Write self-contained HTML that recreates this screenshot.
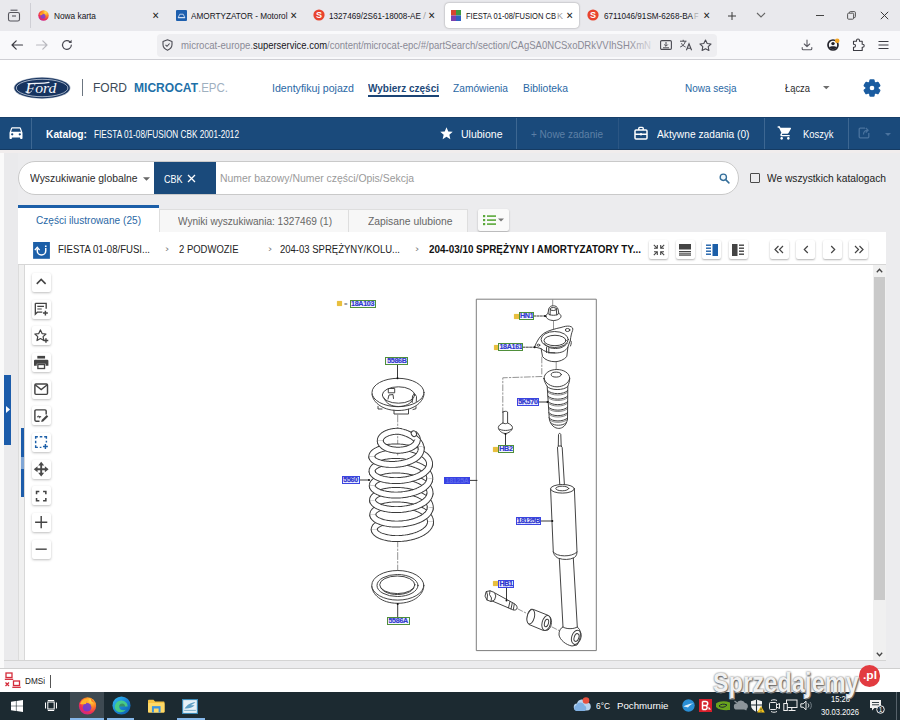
<!DOCTYPE html>
<html lang="pl">
<head>
<meta charset="utf-8">
<title>FIESTA 01-08/FUSION CBK</title>
<style>
*{box-sizing:border-box;margin:0;padding:0}
html,body{width:900px;height:720px;overflow:hidden;background:#fff;font-family:"Liberation Sans",sans-serif;}
#root{position:relative;width:900px;height:720px;overflow:hidden;background:#ececee}
.a{position:absolute;white-space:nowrap;line-height:1}
.t{position:absolute;white-space:nowrap;line-height:1;transform-origin:0 50%;display:inline-block}
svg{position:absolute;overflow:visible}
/* browser chrome */
#tabbar{left:0;top:0;width:900px;height:31px;background:#e9e9ed}
#navbar{left:0;top:31px;width:900px;height:29px;background:#f9f9fb;border-bottom:1px solid #cfcfd4}
#urlbar{left:157px;top:34px;width:560px;height:23px;background:#eeeef1;border-radius:4px}
.tab{font-size:9.5px;color:#15141a;top:11px}
.tx{font-size:10px;color:#222;top:10.500px}
#acttab{left:445px;top:3px;width:134px;height:25px;background:#fff;border-radius:4px;box-shadow:0 0 2px rgba(0,0,0,.4)}
/* page */
#hdr{left:0;top:60px;width:900px;height:57px;background:#fff}
#bluebar{left:0;top:116.600px;width:900px;height:33.700px;background:#1a4a7b;border-top:1px solid #173f6a;border-bottom:1.500px solid #153b63}
.bb{color:#fff;font-size:10.300px;top:129.900px}
.sep{width:1px;top:118px;height:31px;background:#3d6792}
.nav{font-size:10.5px;color:#2a68a5;top:83px}
#search{left:18px;top:161px;width:721px;height:34px;background:#fff;border:1px solid #c9c9c9;border-radius:17px;overflow:hidden}
#crumbs{left:18px;top:232px;width:868px;height:32.500px;background:#fff;border-bottom:1px solid #d6d6d6}
.cr{font-size:10px;color:#222;top:245px}
.chev{font-size:9px;color:#777;top:245px}
#content{left:25px;top:265px;width:848px;height:395px;background:#fff}
.tb{left:32px;width:19px;height:19px;background:#fff;border-radius:2px;box-shadow:0 1px 2.500px rgba(0,0,0,.26)}
.ib{top:240px;width:19px;height:19px;background:#fff;border-radius:2px;box-shadow:0 1px 2px rgba(0,0,0,.30)}
#taskbar{left:0;top:691.700px;width:900px;height:28.300px;background:#1c2a31}
#dmsi{left:0;top:668px;width:900px;height:24px;background:#fff;border-top:1px solid #cfcfcf}
.lb{position:absolute;font-size:7.2px;font-weight:bold;line-height:6.6px;text-align:center;color:#2a33c9;background:#f3f5ff;border:1px solid #4f8f3a;letter-spacing:-0.35px;overflow:hidden;-webkit-text-stroke:.18px #3a44d6}
.lbb{border-color:#3a45e0;background:#eef0ff;-webkit-text-stroke:.3px #3a44d6}
.lbf{background:#3c4be4;color:#dfe3ff;border-color:#3c4be4;-webkit-text-stroke:.2px #dfe3ff}
.lbs{color:#5a66ec;-webkit-text-stroke:0;background:#3842e2;border-color:#3842e2}
.ysq{position:absolute;width:5px;height:5px;background:#e8bf3e;border-radius:.8px;box-shadow:0 0 1px #e8bf3e}
</style>
</head>
<body>
<div id="root">
<!--TABBAR-->
<div class="a" id="tabbar"></div>
<div class="a" id="navbar"></div>
<div class="a" id="urlbar"></div>
<div class="a" id="acttab"></div>
<!--TABTEXT-->
<svg style="left:7px;top:9px" width="14" height="13" viewBox="0 0 14 13"><rect x="1.5" y="3.5" width="11" height="8.5" rx="1.8" fill="none" stroke="#55555c" stroke-width="1.1"/><path d="M3.5 1.2h7" stroke="#55555c" stroke-width="1.1" fill="none"/><path d="M5 7h4" stroke="#55555c" stroke-width="1.1"/></svg>
<div class="a" style="left:30px;top:3px;width:1px;height:25px;background:#cfcfd5"></div>
<svg style="left:38px;top:10px" width="11" height="11" viewBox="0 0 22 22"><defs><radialGradient id="fx" cx="0.7" cy="0.2" r="0.95"><stop offset="0" stop-color="#ffe14a"/><stop offset="0.35" stop-color="#ff8a23"/><stop offset="0.7" stop-color="#f0304f"/><stop offset="1" stop-color="#b71fb0"/></radialGradient></defs><circle cx="11" cy="11" r="10.5" fill="url(#fx)"/><circle cx="10" cy="12.5" r="5" fill="#7a3cd8" opacity=".85"/><path d="M3 9c2-4 6-6 9-3-3 0-4 2-3 4-2 0-4 1-6-1z" fill="#ff9a1f"/></svg>
<span class="t tab" style="transform:scaleX(0.8739);left:54px">Nowa karta</span>
<span class="t tx" style="transform:scaleX(0.8750);left:152px;">✕</span>
<svg style="left:176px;top:10px" width="11" height="11" viewBox="0 0 11 11"><rect width="11" height="11" rx="1" fill="#1d5fae"/><path d="M2.2 7.6l1.6-3.4h3.4l1.6 3.4z" fill="none" stroke="#dfe9f7" stroke-width=".8"/><path d="M2 7.7h7" stroke="#dfe9f7" stroke-width=".9"/></svg>
<span class="t tab" style="transform:scaleX(0.8623);left:191px">AMORTYZATOR - Motorol</span>
<span class="t tx" style="transform:scaleX(0.8750);left:290px;">✕</span>
<svg style="left:313px;top:9px" width="12" height="12" viewBox="0 0 12 12"><circle cx="6" cy="6" r="5.6" fill="#e8432e"/><text x="6" y="9.2" font-size="9" font-weight="bold" text-anchor="middle" fill="#fff" font-family="Liberation Sans">S</text></svg>
<span class="t tab" style="transform:scaleX(0.8579);left:329px">1327469/2S61-18008-AE</span>
<span class="t tab" style="transform:scaleX(1.1361);left:423px;color:#aaa">/</span>
<span class="t tx" style="transform:scaleX(0.8750);left:427.5px;">✕</span>
<svg style="left:451px;top:10px" width="10" height="11" viewBox="0 0 10 11"><rect x="0" y="0" width="5" height="5.5" fill="#d5452f"/><rect x="5" y="0" width="5" height="5.5" fill="#3c9a43"/><rect x="0" y="5.5" width="5" height="5.5" fill="#7b3fb0"/><rect x="5" y="5.5" width="5" height="5.5" fill="#2d62c4"/></svg>
<span class="t tab" style="transform:scaleX(0.7942);left:466px">FIESTA 01-08/FUSION CB</span>
<span class="t tab" style="transform:scaleX(0.9458);left:556.5px;color:#999">K</span>
<span class="t tx" style="transform:scaleX(0.8750);left:565.5px;">✕</span>
<svg style="left:587px;top:9px" width="12" height="12" viewBox="0 0 12 12"><circle cx="6" cy="6" r="5.6" fill="#e8432e"/><text x="6" y="9.2" font-size="9" font-weight="bold" text-anchor="middle" fill="#fff" font-family="Liberation Sans">S</text></svg>
<span class="t tab" style="transform:scaleX(0.8568);left:603.5px">6711046/91SM-6268-BA</span>
<span class="t tab" style="transform:scaleX(0.7742);left:694px;color:#aaa">F</span>
<span class="t tx" style="transform:scaleX(0.8750);left:702.5px;">✕</span>
<svg style="left:727px;top:11px" width="10" height="10" viewBox="0 0 10 10"><path d="M5 1v8M1 5h8" stroke="#3a3a3a" stroke-width="1"/></svg>
<svg style="left:756px;top:12px" width="10" height="6" viewBox="0 0 10 6"><path d="M1 1l4 4 4-4" stroke="#666" stroke-width="1.1" fill="none"/></svg>
<div class="a" style="left:816px;top:15px;width:7.500px;height:1px;background:#444"></div>
<svg style="left:847px;top:11px" width="9" height="9" viewBox="0 0 9 9"><rect x=".6" y="2.2" width="6" height="6" rx="1" fill="none" stroke="#444" stroke-width=".9"/><path d="M2.4 2V1.6a1 1 0 011-1h4a1 1 0 011 1v4a1 1 0 01-1 1h-.6" fill="none" stroke="#444" stroke-width=".9"/></svg>
<svg style="left:880px;top:11px" width="9" height="9" viewBox="0 0 9 9"><path d="M.8.8l7.400 7.400M8.200 .8L.8 8.200" stroke="#3a3a3a" stroke-width="1"/></svg>
<!--NAVICONS-->
<svg style="left:11px;top:40px" width="12" height="10" viewBox="0 0 12 10"><path d="M5.200 .8L1 5l4.200 4.200M1 5h10.500" fill="none" stroke="#3b3b42" stroke-width="1.2" stroke-linecap="round" stroke-linejoin="round"/></svg>
<svg style="left:36px;top:40px" width="12" height="10" viewBox="0 0 12 10"><path d="M6.800 .8L11 5l-4.200 4.200M11 5H.5" fill="none" stroke="#b9b9bf" stroke-width="1.2" stroke-linecap="round" stroke-linejoin="round"/></svg>
<svg style="left:61px;top:39px" width="12" height="12" viewBox="0 0 12 12"><path d="M10.300 6.200a4.400 4.400 0 11-1.300-3.300" fill="none" stroke="#4a4a52" stroke-width="1.2" stroke-linecap="round"/><path d="M10.600 .8v3.100H7.500z" fill="#4a4a52"/></svg>
<svg style="left:162px;top:39px" width="11" height="12" viewBox="0 0 11 12"><path d="M5.500 .8l4.500 1.600v3.100c0 2.800-2 4.700-4.500 5.700C3 10.200 1 8.300 1 5.500V2.400z" fill="none" stroke="#4a4a52" stroke-width="1.100" stroke-linejoin="round"/><path d="M3.500 5.800l1.500 1.500 2.600-2.800" fill="none" stroke="#4a4a52" stroke-width="1.100"/></svg>
<span class="t" style="transform:scaleX(0.9139);left:181px;top:40px;font-size:10.5px;color:#8a8a96">microcat-europe.</span>
<span class="t" style="transform:scaleX(0.8994);left:253px;top:40px;font-size:10.5px;color:#15141a">superservice.com</span>
<span class="t" style="transform:scaleX(0.9072);left:327px;top:40px;font-size:10.5px;color:#8a8a96">/content/microcat-epc/#/partSearch/section/CAgSA0NCSxoDRkVVIhSHXmN</span>
<div class="a" style="left:628px;top:35px;width:30px;height:21px;background:linear-gradient(90deg,rgba(238,238,241,0),#eeeef1)"></div>
<svg style="left:660px;top:40px" width="12" height="10" viewBox="0 0 12 10"><rect x=".6" y=".6" width="10.800" height="8.800" rx="1.2" fill="none" stroke="#4a4a52" stroke-width="1.100"/><path d="M6 2v4M4.200 4.500L6 6.300l1.800-1.800M3 7.800h6" fill="none" stroke="#4a4a52" stroke-width="1"/></svg>
<svg style="left:679px;top:39px" width="14" height="12" viewBox="0 0 14 12"><path d="M1 2.200h6.500M4.200 .8v1.400M6.300 2.300C5.800 5 3.800 7 1.200 8M2.500 4.200C3.200 6 4.800 7.300 6.600 8" fill="none" stroke="#4a4a52" stroke-width="1"/><path d="M7.400 11.300l2.600-6.500 2.600 6.500M8.300 9.300h3.400" fill="none" stroke="#4a4a52" stroke-width="1.100"/></svg>
<svg style="left:699px;top:39px" width="13" height="12" viewBox="0 0 13 12"><path d="M6.500 1l1.700 3.500 3.800.5-2.800 2.700.7 3.800-3.400-1.800-3.400 1.800.7-3.800L1 5l3.800-.5z" fill="none" stroke="#4a4a52" stroke-width="1.100" stroke-linejoin="round"/></svg>
<svg style="left:801px;top:39px" width="12" height="12" viewBox="0 0 12 12"><path d="M6 1v6.500M3.300 5L6 7.700 8.700 5M1.200 8.500v1.300a1 1 0 001 1h7.600a1 1 0 001-1V8.500" fill="none" stroke="#5a5a62" stroke-width="1.100" stroke-linecap="round" stroke-linejoin="round"/></svg>
<svg style="left:827px;top:38px" width="13" height="13" viewBox="0 0 13 13"><circle cx="6" cy="7" r="5" fill="none" stroke="#24242c" stroke-width="1.700"/><path d="M2.200 9.500c1-1.800 6.600-1.800 7.600 0A5 5 0 012.200 9.500z" fill="#24242c"/><circle cx="6" cy="5.600" r="1.700" fill="#24242c"/><circle cx="10.200" cy="2.700" r="2.300" fill="#f5a623"/></svg>
<svg style="left:852px;top:38px" width="13" height="14" viewBox="0 0 13 14"><path d="M4.500 3.200V2.500a1.500 1.500 0 013 0v.7h2.700v3h.5a1.500 1.500 0 010 3h-.5v3.300H1.500V9.200H2a1.500 1.500 0 000-3h-.5v-3z" fill="none" stroke="#3b3b42" stroke-width="1.100" stroke-linejoin="round"/></svg>
<svg style="left:878px;top:40px" width="11" height="10" viewBox="0 0 11 10"><path d="M.5 1.500h10M.5 5h10M.5 8.500h10" stroke="#3b3b42" stroke-width="1.100"/></svg>
<!--HEADER-->
<div class="a" id="hdr"></div>
<div class="a" id="bluebar"></div>
<!--HDRCONTENT-->
<svg style="left:13px;top:75.600px" width="58" height="24" viewBox="0 0 58 24"><ellipse cx="29.100" cy="12" rx="28.400" ry="10.900" fill="#aab4c4"/><ellipse cx="29.100" cy="12" rx="27.700" ry="10.300" fill="#16335f"/><ellipse cx="29.100" cy="12" rx="25.800" ry="8.700" fill="none" stroke="#dfe6f0" stroke-width=".7"/><text x="28" y="16.800" font-family="Liberation Serif" font-style="italic" font-size="15" fill="#f4f7fb" text-anchor="middle" textLength="31" lengthAdjust="spacingAndGlyphs">Ford</text><path d="M15.500 8.200 C20 6.200 27 8.500 36 6.300" fill="none" stroke="#f4f7fb" stroke-width="1.200" stroke-linecap="round"/><path d="M13 15.500 C14 18 17.500 17.500 18.500 15" fill="none" stroke="#f4f7fb" stroke-width="1" stroke-linecap="round"/></svg>
<div class="a" style="left:82px;top:79px;width:1px;height:17px;background:#6b7580"></div>
<span class="t" style="transform:scaleX(0.9599);left:93px;top:81.500px;font-size:12.500px;color:#3c4a58">FORD</span>
<span class="t" style="transform:scaleX(0.9633);left:134px;top:81.500px;font-size:12.500px;font-weight:bold;color:#1d70a8">MICROCAT</span>
<span class="t" style="transform:scaleX(0.9187);left:198px;top:81.500px;font-size:12.500px;color:#9fb0bf">.EPC.</span>
<span class="t nav" style="transform:scaleX(1.0106);left:272px">Identyfikuj pojazd</span>
<span class="t nav" style="transform:scaleX(0.9528);left:368px;font-weight:bold;color:#1c4878">Wybierz części</span>
<div class="a" style="left:368px;top:95px;width:71px;height:1.500px;background:#1b4475"></div>
<span class="t nav" style="transform:scaleX(0.9716);left:453px">Zamówienia</span>
<span class="t nav" style="transform:scaleX(0.9883);left:523px">Biblioteka</span>
<span class="t nav" style="transform:scaleX(0.9488);left:684.500px">Nowa sesja</span>
<span class="t nav" style="transform:scaleX(0.8919);left:784.500px;color:#2b2b2b">Łącza</span>
<svg style="left:822.800px;top:86.300px" width="6.600" height="3.400" viewBox="0 0 8 4"><path d="M0 0h8L4 4z" fill="#6d6d6d"/></svg>
<svg style="left:862px;top:78px" width="20" height="20" viewBox="0 0 24 24"><path fill="#1a5ca0" stroke="#1a5ca0" stroke-width="1.600" stroke-linejoin="round" d="M19.140 12.940c.040-.300.060-.610.060-.940 0-.320-.020-.640-.070-.940l2.030-1.580a.490.490 0 00.120-.610l-1.920-3.320a.488.488 0 00-.590-.220l-2.390.960c-.500-.380-1.030-.700-1.620-.940l-.360-2.540a.484.484 0 00-.480-.410h-3.840c-.240 0-.430.170-.470.410l-.360 2.540c-.590.240-1.130.570-1.620.940l-2.390-.960c-.220-.080-.470 0-.590.220L2.740 8.870c-.120.210-.080.470.120.610l2.030 1.580c-.050.300-.090.630-.090.940s.020.640.070.940l-2.030 1.580a.490.490 0 00-.120.610l1.920 3.320c.120.220.370.290.590.220l2.390-.960c.500.380 1.030.700 1.620.940l.360 2.540c.050.240.240.410.480.410h3.840c.240 0 .440-.170.470-.410l.360-2.540c.590-.240 1.130-.560 1.620-.940l2.390.960c.220.080.470 0 .590-.220l1.920-3.320c.120-.220.070-.470-.120-.610l-2.010-1.580zM12 15.600c-1.980 0-3.600-1.620-3.600-3.600s1.620-3.600 3.600-3.600 3.600 1.620 3.600 3.600-1.620 3.600-3.600 3.600z"/></svg>
<svg style="left:9px;top:127px" width="14" height="12" viewBox="0 0 14 12"><path fill="#fff" d="M11.900 1.100A1.200 1.200 0 0010.800.3H3.200c-.5 0-.95.330-1.100.8L.5 5.700v5.500c0 .45.350.8.800.8h.8c.45 0 .8-.35.800-.8v-.8h8.200v.8c0 .45.350.8.800.8h.8c.45 0 .8-.35.800-.8V5.700zM3.200 8.500a1.150 1.150 0 110-2.300 1.150 1.150 0 010 2.300zm7.600 0a1.150 1.150 0 110-2.300 1.150 1.150 0 010 2.300zM2.100 4.800l1.100-3.300h7.600l1.100 3.300z"/></svg>
<div class="a sep" style="left:31px"></div>
<span class="t bb" style="transform:scaleX(0.9951);left:46px;font-weight:bold">Katalog:</span>
<span class="t bb" style="transform:scaleX(0.8061);left:94px;font-size:10.200px;top:130px">FIESTA 01-08/FUSION CBK 2001-2012</span>
<svg style="left:439px;top:126px" width="15" height="15" viewBox="0 0 24 24"><path fill="#fff" d="M12 17.270L18.180 21l-1.640-7.030L22 9.240l-7.190-.610L12 2 9.190 8.630 2 9.240l5.460 4.730L5.820 21z"/></svg>
<span class="t bb" style="transform:scaleX(1.0208);left:460.500px">Ulubione</span>
<div class="a sep" style="left:516px"></div>
<span class="t bb" style="transform:scaleX(0.9711);left:531px;color:#5d80a6">+ Nowe zadanie</span>
<div class="a sep" style="left:618px;background:#2b5684"></div>
<svg style="left:634px;top:126px" width="14" height="14" viewBox="0 0 14 14"><rect x="1" y="4" width="12" height="9" rx="1" fill="none" stroke="#fff" stroke-width="1.500"/><path d="M4.800 4V2.200a.8.8 0 01.8-.8h2.800a.8.8 0 01.8.8V4M1 8.300h12" fill="none" stroke="#fff" stroke-width="1.400"/><rect x="6" y="7.300" width="2" height="2" fill="#fff"/></svg>
<span class="t bb" style="transform:scaleX(0.9915);left:657px">Aktywne zadania (0)</span>
<div class="a sep" style="left:764px"></div>
<svg style="left:777px;top:125px" width="16" height="16" viewBox="0 0 24 24"><path fill="#fff" d="M7 18c-1.100 0-1.990.9-1.990 2S5.900 22 7 22s2-.9 2-2-.9-2-2-2zM1 2v2h2l3.600 7.590-1.350 2.450c-.160.280-.250.610-.250.960 0 1.100.9 2 2 2h12v-2H7.420c-.140 0-.250-.110-.250-.250l.030-.120.900-1.630h7.450c.750 0 1.410-.410 1.750-1.030l3.580-6.490A1.003 1.003 0 0020 4H5.210l-.940-2H1zm16 16c-1.100 0-1.990.9-1.990 2s.890 2 1.990 2 2-.9 2-2-.9-2-2-2z"/></svg>
<span class="t bb" style="transform:scaleX(0.9186);left:802.500px">Koszyk</span>
<div class="a sep" style="left:848px"></div>
<svg style="left:858px;top:127px" width="12" height="12" viewBox="0 0 12 12"><path d="M7 1.200H2.200a1 1 0 00-1 1v7.600a1 1 0 001 1h7.600a1 1 0 001-1V6" fill="none" stroke="#4a739e" stroke-width="1.300"/><path d="M5.500 7.500c0-2.600 1.500-4.200 4-4.200M7.800 1l2.300 2.300-2.300 2.300" fill="none" stroke="#4a739e" stroke-width="1.200"/></svg>
<svg style="left:884.500px;top:132.500px" width="6" height="3.200" viewBox="0 0 8 4"><path d="M0 0h8L4 4z" fill="#4a739e"/></svg>
<div class="a" style="left:0;top:150px;width:4px;height:518px;background:#fafafa"></div>
<!--SEARCH-->
<div class="a" id="search"></div>
<!--SEARCHCONTENT-->
<span class="t" style="transform:scaleX(0.9409);left:29.500px;top:173px;font-size:11px;color:#2b2b2b">Wyszukiwanie globalne</span>
<svg style="left:143px;top:177px" width="7" height="4" viewBox="0 0 8 4"><path d="M0 0h8L4 4z" fill="#666"/></svg>
<div class="a" style="left:154px;top:162px;width:62px;height:32px;background:#1a4a7b"></div>
<span class="t" style="transform:scaleX(0.8567);left:164px;top:173.500px;font-size:10.500px;color:#fff">CBK</span>
<svg style="left:187px;top:174px" width="9" height="9" viewBox="0 0 9 9"><path d="M1 1l7 7M8 1L1 8" stroke="#fff" stroke-width="1.300"/></svg>
<span class="t" style="transform:scaleX(0.9473);left:220px;top:173px;font-size:11px;color:#9a9a9a">Numer bazowy/Numer części/Opis/Sekcja</span>
<svg style="left:718.800px;top:172.800px" width="10.800" height="10.800" viewBox="0 0 12 12"><circle cx="4.800" cy="4.800" r="3.500" fill="#eef6fb" stroke="#336d99" stroke-width="1.500"/><path d="M7.400 7.400l3.600 3.600" stroke="#336d99" stroke-width="1.700" stroke-linecap="round"/></svg>
<div class="a" style="left:749.700px;top:172.500px;width:10.800px;height:10.800px;background:transparent;border:1.300px solid #4a4a4a;border-radius:1px"></div>
<span class="t" style="transform:scaleX(0.9283);left:767px;top:173px;font-size:11px;color:#222">We wszystkich katalogach</span>
<!--TABS-->
<div class="a" style="left:18px;top:205px;width:141px;height:29px;background:#fff;border-top:3.500px solid #1c5fa8"></div>
<span class="t" style="transform:scaleX(0.9622);left:36px;top:215px;font-size:10.500px;color:#2a68a5">Części ilustrowane (25)</span>
<div class="a" style="left:159px;top:209px;width:190px;height:24px;background:#f7f7f7;border:1px solid #dedede;border-bottom:none"></div>
<span class="t" style="transform:scaleX(0.9601);left:177.500px;top:215.500px;font-size:10.500px;color:#666">Wyniki wyszukiwania: 1327469 (1)</span>
<div class="a" style="left:348px;top:209px;width:120px;height:24px;background:#f7f7f7;border:1px solid #dedede;border-bottom:none"></div>
<span class="t" style="transform:scaleX(0.9845);left:367.500px;top:215.500px;font-size:10.500px;color:#666">Zapisane ulubione</span>
<div class="a" style="left:478px;top:209px;width:31px;height:22px;background:#fafafa;border-radius:2px;box-shadow:0 1px 2px rgba(0,0,0,.28)"></div>
<svg style="left:483px;top:214px" width="13" height="12" viewBox="0 0 13 12"><g fill="#5aa83a"><rect x="0" y="1" width="2.200" height="2.200"/><rect x="0" y="5" width="2.200" height="2.200"/><rect x="0" y="9" width="2.200" height="2.200"/><rect x="4" y="1.300" width="9" height="1.600"/><rect x="4" y="5.300" width="9" height="1.600"/><rect x="4" y="9.300" width="9" height="1.600"/></g></svg>
<svg style="left:498px;top:218px" width="6" height="4" viewBox="0 0 8 4"><path d="M0 0h8L4 4z" fill="#777"/></svg>
<!--CRUMBS-->
<div class="a" id="crumbs"></div>
<!--CRUMBCONTENT-->
<svg style="left:32.800px;top:241.600px" width="17" height="16.800" viewBox="0 0 17 17"><rect width="17" height="17" fill="#1c5fa8"/><path d="M4.200 6.500v2.300a4.300 4.300 0 008.600 0V6" fill="none" stroke="#fff" stroke-width="1.500"/><path d="M1.800 8.200l2.400-2.800 2.400 2.800" fill="none" stroke="#fff" stroke-width="1.400"/><rect x="12" y="3.500" width="1.600" height="1.600" fill="#fff"/></svg>
<span class="t cr" style="transform:scaleX(0.9586);left:58px">FIESTA 01-08/FUSI...</span>
<span class="t chev" style="transform:scaleX(1.3333);left:165px">›</span>
<span class="t cr" style="transform:scaleX(0.9475);left:178.500px">2 PODWOZIE</span>
<span class="t chev" style="transform:scaleX(1.3333);left:267.500px">›</span>
<span class="t cr" style="transform:scaleX(0.9511);left:280px">204-03 SPRĘŻYNY/KOLU...</span>
<span class="t chev" style="transform:scaleX(1.3333);left:415px">›</span>
<span class="t cr" style="transform:scaleX(0.9849);left:428.500px;font-weight:bold;color:#111">204-03/10 SPRĘŻYNY I AMORTYZATORY TY...</span>
<div class="a ib" style="left:649px"></div>
<div class="a ib" style="left:675.500px"></div>
<div class="a ib" style="left:702px"></div>
<div class="a ib" style="left:728.500px"></div>
<div class="a ib" style="left:769.500px"></div>
<div class="a ib" style="left:796px"></div>
<div class="a ib" style="left:822.500px"></div>
<div class="a ib" style="left:849px"></div>
<svg style="left:652.500px;top:243.500px" width="12" height="12" viewBox="0 0 12 12"><path d="M1 4.300h3.300V1M.8.800l3.500 3.500M11 4.300H7.700V1M11.200.8L7.700 4.300M1 7.700h3.300V11M.8 11.200l3.500-3.500M11 7.700H7.700V11M11.200 11.200L7.700 7.700" fill="none" stroke="#444" stroke-width="1.100"/></svg>
<svg style="left:679px;top:243.500px" width="12" height="12" viewBox="0 0 12 12"><rect x="0" y="0" width="12" height="5.500" fill="#444"/><rect x="0" y="7" width="12" height="1.300" fill="#444"/><rect x="0" y="9.300" width="12" height="1.300" fill="#444"/><rect x="0" y="11.300" width="12" height=".7" fill="#444"/></svg>
<svg style="left:705.500px;top:243.500px" width="12" height="12" viewBox="0 0 12 12"><rect x="6.500" y="0" width="5.500" height="12" fill="#1c5fa8"/><g fill="#1c5fa8"><rect x="0" y=".5" width="5" height="1.400"/><rect x="0" y="3.500" width="5" height="1.400"/><rect x="0" y="6.500" width="5" height="1.400"/><rect x="0" y="9.500" width="5" height="1.400"/></g></svg>
<svg style="left:732px;top:243.500px" width="12" height="12" viewBox="0 0 12 12"><rect x="0" y="0" width="5.500" height="12" fill="#444"/><g fill="#444"><rect x="7" y=".5" width="5" height="1.400"/><rect x="7" y="3.500" width="5" height="1.400"/><rect x="7" y="6.500" width="5" height="1.400"/><rect x="7" y="9.500" width="5" height="1.400"/></g></svg>
<svg style="left:774px;top:245px" width="10" height="9" viewBox="0 0 10 9"><path d="M4.500 1L1 4.500 4.500 8M9 1L5.500 4.500 9 8" fill="none" stroke="#444" stroke-width="1.200"/></svg>
<svg style="left:803px;top:245px" width="6" height="9" viewBox="0 0 6 9"><path d="M4.800 1L1.300 4.500 4.800 8" fill="none" stroke="#444" stroke-width="1.200"/></svg>
<svg style="left:829.500px;top:245px" width="6" height="9" viewBox="0 0 6 9"><path d="M1.200 1L4.700 4.500 1.200 8" fill="none" stroke="#444" stroke-width="1.200"/></svg>
<svg style="left:854px;top:245px" width="10" height="9" viewBox="0 0 10 9"><path d="M1 1l3.500 3.500L1 8M5.500 1L9 4.500 5.500 8" fill="none" stroke="#444" stroke-width="1.200"/></svg>
<!--CONTENT-->
<div class="a" id="content"></div>
<!--TOOLBAR-->
<div class="a tb" style="top:273.0px"></div>
<svg style="left:34.300px;top:275.3px" width="14.400" height="14.400" viewBox="0 0 13 13"><path d="M2.500 8L6.500 4l4 4" fill="none" stroke="#444" stroke-width="1.400"/></svg>
<div class="a tb" style="top:299.6px"></div>
<svg style="left:34.300px;top:301.9px" width="14.400" height="14.400" viewBox="0 0 13 13"><path d="M1.200 1.200h9.800v5M1.200 1.200v9.800l1.800-1.800h4.500" fill="none" stroke="#444" stroke-width="1.200"/><path d="M3 4h6M3 6.300h4" stroke="#444" stroke-width="1"/><path d="M10.300 7.800v4.400M8.100 10h4.400" stroke="#444" stroke-width="1.300"/></svg>
<div class="a tb" style="top:326.3px"></div>
<svg style="left:34.300px;top:328.6px" width="14.400" height="14.400" viewBox="0 0 13 13"><path d="M5.800 .8l1.500 3.300 3.500.4-2.600 2.400.7 3.500-3.100-1.800-3.100 1.800.7-3.500L.8 4.500l3.500-.4z" fill="none" stroke="#444" stroke-width="1.100" stroke-linejoin="round"/><path d="M10.800 8.300v4.200M8.700 10.400h4.200" stroke="#444" stroke-width="1.300"/></svg>
<div class="a tb" style="top:352.9px"></div>
<svg style="left:34.300px;top:355.2px" width="14.400" height="14.400" viewBox="0 0 13 13"><rect x="3" y=".8" width="7" height="2.400" fill="#444"/><path d="M1 4.200h11a1 1 0 011 1v4.500h-2.500V7.800h-8v1.900H0V5.200a1 1 0 011-1z" fill="#444"/><rect x="3.500" y="8.600" width="6" height="3.600" fill="none" stroke="#444" stroke-width="1.200"/></svg>
<div class="a tb" style="top:379.6px"></div>
<svg style="left:34.300px;top:381.9px" width="14.400" height="14.400" viewBox="0 0 13 13"><rect x=".8" y="1.800" width="11.400" height="9.400" rx="1" fill="none" stroke="#444" stroke-width="1.300"/><path d="M1 2.500l5.500 4.300L12 2.500" fill="none" stroke="#444" stroke-width="1.300"/></svg>
<div class="a tb" style="top:406.2px"></div>
<svg style="left:34.300px;top:408.5px" width="14.400" height="14.400" viewBox="0 0 13 13"><path d="M11 5V1.800a1 1 0 00-1-1H1.800a1 1 0 00-1 1V10a1 1 0 001 1H5" fill="none" stroke="#444" stroke-width="1.300"/><path d="M3 7.500c.8-1.500 1.500-1.500 1.800 0 .5-.8 1-.8 1.500 0" fill="none" stroke="#444" stroke-width="1"/><path d="M6.500 11.800l.4-1.800 4.600-4.600 1.400 1.400-4.600 4.600z" fill="#444"/></svg>
<div class="a tb" style="top:432.9px"></div>
<svg style="left:34.300px;top:435.2px" width="14.400" height="14.400" viewBox="0 0 13 13"><path d="M1.500 3.500V1.500H3.500M5.200 1.500h2.300M9.200 1.500h2v2M11.200 5.200v1.500M1.500 5.200v2.300M1.500 9.200v2H3.500M5.200 11.200h1.500" fill="none" stroke="#1c5fa8" stroke-width="1.300"/><path d="M10.300 8.200v4.400M8.100 10.400h4.400" stroke="#1c5fa8" stroke-width="1.300"/></svg>
<div class="a tb" style="top:459.5px"></div>
<svg style="left:34.300px;top:461.8px" width="14.400" height="14.400" viewBox="0 0 13 13"><path d="M6.500 2v9M2 6.500h9" stroke="#4a4a4a" stroke-width="1.700"/><path d="M6.500 -.2L9.200 3.200H3.800zM6.500 13.200L9.200 9.800H3.800zM-.2 6.500L3.200 3.800v5.400zM13.200 6.500L9.800 3.800v5.400z" fill="#4a4a4a"/></svg>
<div class="a tb" style="top:486.2px"></div>
<svg style="left:34.300px;top:488.5px" width="14.400" height="14.400" viewBox="0 0 13 13"><path d="M2.300 4.800V2.300h2.500M8.200 2.300h2.500v2.500M10.700 8.200v2.500H8.200M4.800 10.700H2.300V8.200" fill="none" stroke="#444" stroke-width="1.400"/></svg>
<div class="a tb" style="top:512.9px"></div>
<svg style="left:34.300px;top:515.2px" width="14.400" height="14.400" viewBox="0 0 13 13"><path d="M6.500 1v11M1 6.500h11" stroke="#444" stroke-width="1.300"/></svg>
<div class="a tb" style="top:539.5px"></div>
<svg style="left:34.300px;top:541.8px" width="14.400" height="14.400" viewBox="0 0 13 13"><path d="M1.500 6.500h10" stroke="#555" stroke-width="1.400"/></svg>
<div class="a" style="left:4px;top:150px;width:14px;height:518px;background:#eaeaec"></div>
<div class="a" style="left:0;top:150.300px;width:900px;height:2.700px;background:#f1eded"></div>
<div class="a" style="left:18px;top:265px;width:7px;height:395px;background:#f0f0f0;border-left:1px solid #dcdcdc;border-right:1px solid #d8d8d8"></div>
<div class="a" style="left:4px;top:375px;width:7px;height:70px;background:#1c5caa"></div>
<svg style="left:5.500px;top:406px" width="4" height="7" viewBox="0 0 4 7"><path d="M0 0l4 3.500L0 7z" fill="#fff"/></svg>
<div class="a" style="left:20.500px;top:428px;width:3.500px;height:69px;background:#1c5caa"></div>
<div class="a" style="left:20.500px;top:457px;width:3.500px;height:12px;background:#7fa6d6"></div>
<!--DIAGRAM-->
<svg style="left:0;top:0" width="900" height="720" viewBox="0 0 900 720"><g fill="none" stroke="#3a3a3a" stroke-width="0.95" stroke-linecap="round" stroke-linejoin="round">
<rect x="476.700" y="299.200" width="119.600" height="351.400" stroke="#6e6e6e" stroke-width=".9"/>
<path d="M372 394 C372 400 380 410.500 398 410.500 C416 410.500 424 400 424 394" />
<ellipse cx="398" cy="392.500" rx="26" ry="14.200" fill="#fff"/>
<ellipse cx="398.500" cy="395" rx="16.200" ry="8.200"/>
<path d="M384 398 C386 404 392 406.500 398.500 406.500 C405 406.500 411 404 413 399"/>
<rect x="388.700" y="388.500" width="6" height="4.300"/>
<path d="M412.200 402.500 L412.500 396 L414.500 393.500 L416.500 396.500 L416.300 401.500"/>
<path d="M388 399 l1 -4 l4 -.5 l.5 4"/>
<path d="M394 410.200 v3.800 h14.500 v-4.800"/>
<path d="M378 406.500 v2.500 h4 M413 409.500 l3 -.8 v-2"/>
<path d="M397.700 415 V455" stroke-dasharray="7 2 1.500 2" stroke="#666" stroke-width=".7"/>
<path d="M397.700 540 V584" stroke-dasharray="7 2 1.500 2" stroke="#666" stroke-width=".7"/>
<path d="M413.9 433.7 L414.3 434.0 L414.7 434.4 L415.0 434.7 L415.4 435.1 L415.7 435.5 L416.0 435.9 L416.2 436.3 L416.5 436.6 L416.7 437.0 L416.9 437.4 L417.0 437.9 L417.1 438.3 L417.2 438.7 L417.3 439.1 L417.3 439.5 L417.3 439.9 L417.3 440.3 L417.2 440.7 L417.1 441.1 L417.0 441.5 L416.9 442.0" stroke="#3a3a3a" stroke-width="6.900" stroke-linecap="butt"/>
<path d="M413.9 433.7 L414.3 434.0 L414.7 434.4 L415.0 434.7 L415.4 435.1 L415.7 435.5 L416.0 435.9 L416.2 436.3 L416.5 436.6 L416.7 437.0 L416.9 437.4 L417.0 437.9 L417.1 438.3 L417.2 438.7 L417.3 439.1 L417.3 439.5 L417.3 439.9 L417.3 440.3 L417.2 440.7 L417.1 441.1 L417.0 441.5 L416.9 442.0" stroke="#fff" stroke-width="5" stroke-linecap="butt"/>
<path d="M380.7 442.6 L380.5 442.3 L380.4 441.9 L380.4 441.5 L380.3 441.1 L380.3 440.7 L380.3 440.3 L380.4 439.9 L380.4 439.6 L380.5 439.2 L380.7 438.8 L380.8 438.4 L381.0 438.0 L381.2 437.7 L381.5 437.3 L381.7 436.9 L382.0 436.6 L382.4 436.2 L382.7 435.9 L383.1 435.6 L383.5 435.3 L383.9 434.9 L384.4 434.6 L384.9 434.3 L385.4 434.1 L385.9 433.8 L386.4 433.5 L387.0 433.3 L387.6 433.0 L388.2 432.8 L388.8 432.6 L389.4 432.4 L390.1 432.2 L390.7 432.1 L391.4 431.9 L392.1 431.8 L392.8 431.6 L393.5 431.5 L394.2 431.4 L394.9 431.4 L395.6 431.3 L396.4 431.2 L397.1 431.2 L397.8 431.2 L398.6 431.2 L399.3 431.3 L400.1 431.4 L400.8 431.6 L401.5 431.8 L402.3 432.0 L403.0 432.2 L403.7 432.4 L404.5 432.6 L405.2 432.9 L405.9 433.1 L406.6 433.4 L407.3 433.7 L408.0 434.0 L408.7 434.3 L409.4 434.7 L410.1 435.0 L410.8 435.4 L411.4 435.7 L412.1 436.1 L412.7 436.5 L413.3 436.9 L413.9 437.4 L414.5 437.8 L415.0 438.2 L415.6 438.7 L416.1 439.2 L416.6 439.6 L417.1 440.1 L417.6 440.6 L418.0 441.1 L418.4 441.6 L418.8 442.1 L419.2 442.7 L419.5 443.2 L419.8 443.8 L420.1 444.3 L420.3 444.9 L420.5 445.4 L420.7 446.0 L420.9 446.5 L421.0 447.1 L421.1 447.7 L421.2 448.2 L421.2 448.8 L421.2 449.4" stroke="#3a3a3a" stroke-width="6.900" stroke-linecap="butt"/>
<path d="M380.7 442.6 L380.5 442.3 L380.4 441.9 L380.4 441.5 L380.3 441.1 L380.3 440.7 L380.3 440.3 L380.4 439.9 L380.4 439.6 L380.5 439.2 L380.7 438.8 L380.8 438.4 L381.0 438.0 L381.2 437.7 L381.5 437.3 L381.7 436.9 L382.0 436.6 L382.4 436.2 L382.7 435.9 L383.1 435.6 L383.5 435.3 L383.9 434.9 L384.4 434.6 L384.9 434.3 L385.4 434.1 L385.9 433.8 L386.4 433.5 L387.0 433.3 L387.6 433.0 L388.2 432.8 L388.8 432.6 L389.4 432.4 L390.1 432.2 L390.7 432.1 L391.4 431.9 L392.1 431.8 L392.8 431.6 L393.5 431.5 L394.2 431.4 L394.9 431.4 L395.6 431.3 L396.4 431.2 L397.1 431.2 L397.8 431.2 L398.6 431.2 L399.3 431.3 L400.1 431.4 L400.8 431.6 L401.5 431.8 L402.3 432.0 L403.0 432.2 L403.7 432.4 L404.5 432.6 L405.2 432.9 L405.9 433.1 L406.6 433.4 L407.3 433.7 L408.0 434.0 L408.7 434.3 L409.4 434.7 L410.1 435.0 L410.8 435.4 L411.4 435.7 L412.1 436.1 L412.7 436.5 L413.3 436.9 L413.9 437.4 L414.5 437.8 L415.0 438.2 L415.6 438.7 L416.1 439.2 L416.6 439.6 L417.1 440.1 L417.6 440.6 L418.0 441.1 L418.4 441.6 L418.8 442.1 L419.2 442.7 L419.5 443.2 L419.8 443.8 L420.1 444.3 L420.3 444.9 L420.5 445.4 L420.7 446.0 L420.9 446.5 L421.0 447.1 L421.1 447.7 L421.2 448.2 L421.2 448.8 L421.2 449.4" stroke="#fff" stroke-width="5" stroke-linecap="butt"/>
<path d="M372.4 458.5 L372.2 458.1 L372.0 457.7 L371.9 457.3 L371.8 456.9 L371.8 456.5 L371.8 456.1 L371.9 455.7 L372.0 455.3 L372.2 454.8 L372.4 454.4 L372.6 454.0 L372.9 453.6 L373.2 453.2 L373.6 452.8 L374.0 452.4 L374.5 452.0 L375.0 451.6 L375.6 451.3 L376.1 450.9 L376.8 450.6 L377.4 450.3 L378.1 449.9 L378.9 449.6 L379.7 449.3 L380.5 449.1 L381.3 448.8 L382.2 448.5 L383.1 448.3 L384.0 448.1 L385.0 447.9 L385.9 447.7 L386.9 447.5 L388.0 447.4 L389.0 447.3 L390.1 447.2 L391.2 447.1 L392.3 447.0 L393.4 447.0 L394.5 446.9 L395.6 446.9 L396.8 446.9 L397.9 447.0 L399.1 447.0 L400.2 447.1 L401.4 447.2 L402.5 447.3 L403.7 447.4 L404.8 447.6 L406.0 447.8 L407.1 448.0 L408.2 448.2 L409.3 448.4 L410.4 448.7 L411.5 449.0 L412.5 449.3 L413.6 449.6 L414.6 449.9 L415.6 450.3 L416.6 450.6 L417.5 451.0 L418.4 451.4 L419.3 451.8 L420.2 452.3 L421.0 452.7 L421.8 453.2 L422.6 453.7 L423.3 454.2 L424.0 454.7 L424.7 455.2 L425.3 455.7 L425.9 456.3 L426.4 456.8 L426.9 457.4 L427.4 458.0 L427.8 458.5 L428.2 459.1 L428.5 459.7 L428.8 460.3 L429.0 460.9 L429.2 461.5 L429.4 462.1 L429.5 462.7 L429.5 463.3 L429.5 464.0 L429.5 464.6 L429.4 465.2 L429.3 465.8 L429.1 466.4 L428.9 467.0" stroke="#3a3a3a" stroke-width="6.900" stroke-linecap="butt"/>
<path d="M372.4 458.5 L372.2 458.1 L372.0 457.7 L371.9 457.3 L371.8 456.9 L371.8 456.5 L371.8 456.1 L371.9 455.7 L372.0 455.3 L372.2 454.8 L372.4 454.4 L372.6 454.0 L372.9 453.6 L373.2 453.2 L373.6 452.8 L374.0 452.4 L374.5 452.0 L375.0 451.6 L375.6 451.3 L376.1 450.9 L376.8 450.6 L377.4 450.3 L378.1 449.9 L378.9 449.6 L379.7 449.3 L380.5 449.1 L381.3 448.8 L382.2 448.5 L383.1 448.3 L384.0 448.1 L385.0 447.9 L385.9 447.7 L386.9 447.5 L388.0 447.4 L389.0 447.3 L390.1 447.2 L391.2 447.1 L392.3 447.0 L393.4 447.0 L394.5 446.9 L395.6 446.9 L396.8 446.9 L397.9 447.0 L399.1 447.0 L400.2 447.1 L401.4 447.2 L402.5 447.3 L403.7 447.4 L404.8 447.6 L406.0 447.8 L407.1 448.0 L408.2 448.2 L409.3 448.4 L410.4 448.7 L411.5 449.0 L412.5 449.3 L413.6 449.6 L414.6 449.9 L415.6 450.3 L416.6 450.6 L417.5 451.0 L418.4 451.4 L419.3 451.8 L420.2 452.3 L421.0 452.7 L421.8 453.2 L422.6 453.7 L423.3 454.2 L424.0 454.7 L424.7 455.2 L425.3 455.7 L425.9 456.3 L426.4 456.8 L426.9 457.4 L427.4 458.0 L427.8 458.5 L428.2 459.1 L428.5 459.7 L428.8 460.3 L429.0 460.9 L429.2 461.5 L429.4 462.1 L429.5 462.7 L429.5 463.3 L429.5 464.0 L429.5 464.6 L429.4 465.2 L429.3 465.8 L429.1 466.4 L428.9 467.0" stroke="#fff" stroke-width="5" stroke-linecap="butt"/>
<path d="M372.7 473.2 L372.4 472.8 L372.3 472.4 L372.2 471.9 L372.1 471.5 L372.1 471.1 L372.1 470.7 L372.1 470.2 L372.2 469.8 L372.4 469.4 L372.6 469.0 L372.8 468.5 L373.1 468.1 L373.5 467.7 L373.8 467.3 L374.3 466.9 L374.7 466.6 L375.2 466.2 L375.8 465.8 L376.3 465.5 L377.0 465.1 L377.6 464.8 L378.3 464.5 L379.1 464.1 L379.8 463.9 L380.7 463.6 L381.5 463.3 L382.4 463.1 L383.3 462.8 L384.2 462.6 L385.1 462.4 L386.1 462.2 L387.1 462.1 L388.1 461.9 L389.2 461.8 L390.2 461.7 L391.3 461.6 L392.4 461.5 L393.5 461.5 L394.7 461.4 L395.8 461.4 L396.9 461.4 L398.1 461.5 L399.2 461.5 L400.4 461.6 L401.5 461.7 L402.7 461.8 L403.8 461.9 L405.0 462.1 L406.1 462.3 L407.2 462.5 L408.4 462.7 L409.5 462.9 L410.6 463.2 L411.6 463.4 L412.7 463.7 L413.7 464.0 L414.8 464.4 L415.8 464.7 L416.7 465.1 L417.7 465.5 L418.6 465.9 L419.5 466.3 L420.4 466.7 L421.2 467.2 L422.0 467.7 L422.8 468.1 L423.5 468.6 L424.2 469.1 L424.9 469.7 L425.5 470.2 L426.1 470.7 L426.6 471.3 L427.1 471.8 L427.6 472.4 L428.0 473.0 L428.4 473.6 L428.7 474.2 L429.0 474.8 L429.3 475.4 L429.4 476.0 L429.6 476.6 L429.7 477.2 L429.8 477.8 L429.8 478.4 L429.7 479.0 L429.7 479.6 L429.5 480.2 L429.4 480.8 L429.1 481.5" stroke="#3a3a3a" stroke-width="6.900" stroke-linecap="butt"/>
<path d="M372.7 473.2 L372.4 472.8 L372.3 472.4 L372.2 471.9 L372.1 471.5 L372.1 471.1 L372.1 470.7 L372.1 470.2 L372.2 469.8 L372.4 469.4 L372.6 469.0 L372.8 468.5 L373.1 468.1 L373.5 467.7 L373.8 467.3 L374.3 466.9 L374.7 466.6 L375.2 466.2 L375.8 465.8 L376.3 465.5 L377.0 465.1 L377.6 464.8 L378.3 464.5 L379.1 464.1 L379.8 463.9 L380.7 463.6 L381.5 463.3 L382.4 463.1 L383.3 462.8 L384.2 462.6 L385.1 462.4 L386.1 462.2 L387.1 462.1 L388.1 461.9 L389.2 461.8 L390.2 461.7 L391.3 461.6 L392.4 461.5 L393.5 461.5 L394.7 461.4 L395.8 461.4 L396.9 461.4 L398.1 461.5 L399.2 461.5 L400.4 461.6 L401.5 461.7 L402.7 461.8 L403.8 461.9 L405.0 462.1 L406.1 462.3 L407.2 462.5 L408.4 462.7 L409.5 462.9 L410.6 463.2 L411.6 463.4 L412.7 463.7 L413.7 464.0 L414.8 464.4 L415.8 464.7 L416.7 465.1 L417.7 465.5 L418.6 465.9 L419.5 466.3 L420.4 466.7 L421.2 467.2 L422.0 467.7 L422.8 468.1 L423.5 468.6 L424.2 469.1 L424.9 469.7 L425.5 470.2 L426.1 470.7 L426.6 471.3 L427.1 471.8 L427.6 472.4 L428.0 473.0 L428.4 473.6 L428.7 474.2 L429.0 474.8 L429.3 475.4 L429.4 476.0 L429.6 476.6 L429.7 477.2 L429.8 477.8 L429.8 478.4 L429.7 479.0 L429.7 479.6 L429.5 480.2 L429.4 480.8 L429.1 481.5" stroke="#fff" stroke-width="5" stroke-linecap="butt"/>
<path d="M372.9 487.7 L372.7 487.3 L372.5 486.9 L372.4 486.5 L372.3 486.0 L372.3 485.6 L372.3 485.2 L372.4 484.8 L372.5 484.3 L372.6 483.9 L372.8 483.5 L373.1 483.1 L373.3 482.7 L373.7 482.3 L374.0 481.9 L374.5 481.5 L374.9 481.1 L375.4 480.7 L376.0 480.3 L376.6 480.0 L377.2 479.6 L377.8 479.3 L378.5 479.0 L379.3 478.7 L380.0 478.4 L380.8 478.1 L381.7 477.8 L382.5 477.6 L383.4 477.3 L384.4 477.1 L385.3 476.9 L386.3 476.7 L387.3 476.6 L388.3 476.4 L389.4 476.3 L390.4 476.2 L391.5 476.1 L392.6 476.0 L393.7 476.0 L394.8 475.9 L395.9 475.9 L397.1 475.9 L398.2 476.0 L399.4 476.0 L400.5 476.1 L401.7 476.2 L402.8 476.3 L404.0 476.4 L405.1 476.6 L406.3 476.7 L407.4 476.9 L408.5 477.2 L409.6 477.4 L410.7 477.6 L411.8 477.9 L412.9 478.2 L413.9 478.5 L414.9 478.9 L415.9 479.2 L416.9 479.6 L417.9 480.0 L418.8 480.4 L419.7 480.8 L420.6 481.2 L421.4 481.7 L422.2 482.1 L423.0 482.6 L423.7 483.1 L424.4 483.6 L425.1 484.1 L425.7 484.6 L426.3 485.2 L426.8 485.7 L427.4 486.3 L427.8 486.9 L428.2 487.4 L428.6 488.0 L428.9 488.6 L429.2 489.2 L429.5 489.8 L429.7 490.4 L429.8 491.0 L429.9 491.6 L430.0 492.2 L430.0 492.9 L430.0 493.5 L429.9 494.1 L429.8 494.7 L429.6 495.3 L429.4 495.9" stroke="#3a3a3a" stroke-width="6.900" stroke-linecap="butt"/>
<path d="M372.9 487.7 L372.7 487.3 L372.5 486.9 L372.4 486.5 L372.3 486.0 L372.3 485.6 L372.3 485.2 L372.4 484.8 L372.5 484.3 L372.6 483.9 L372.8 483.5 L373.1 483.1 L373.3 482.7 L373.7 482.3 L374.0 481.9 L374.5 481.5 L374.9 481.1 L375.4 480.7 L376.0 480.3 L376.6 480.0 L377.2 479.6 L377.8 479.3 L378.5 479.0 L379.3 478.7 L380.0 478.4 L380.8 478.1 L381.7 477.8 L382.5 477.6 L383.4 477.3 L384.4 477.1 L385.3 476.9 L386.3 476.7 L387.3 476.6 L388.3 476.4 L389.4 476.3 L390.4 476.2 L391.5 476.1 L392.6 476.0 L393.7 476.0 L394.8 475.9 L395.9 475.9 L397.1 475.9 L398.2 476.0 L399.4 476.0 L400.5 476.1 L401.7 476.2 L402.8 476.3 L404.0 476.4 L405.1 476.6 L406.3 476.7 L407.4 476.9 L408.5 477.2 L409.6 477.4 L410.7 477.6 L411.8 477.9 L412.9 478.2 L413.9 478.5 L414.9 478.9 L415.9 479.2 L416.9 479.6 L417.9 480.0 L418.8 480.4 L419.7 480.8 L420.6 481.2 L421.4 481.7 L422.2 482.1 L423.0 482.6 L423.7 483.1 L424.4 483.6 L425.1 484.1 L425.7 484.6 L426.3 485.2 L426.8 485.7 L427.4 486.3 L427.8 486.9 L428.2 487.4 L428.6 488.0 L428.9 488.6 L429.2 489.2 L429.5 489.8 L429.7 490.4 L429.8 491.0 L429.9 491.6 L430.0 492.2 L430.0 492.9 L430.0 493.5 L429.9 494.1 L429.8 494.7 L429.6 495.3 L429.4 495.9" stroke="#fff" stroke-width="5" stroke-linecap="butt"/>
<path d="M373.2 502.3 L373.0 501.9 L372.8 501.4 L372.7 501.0 L372.6 500.6 L372.6 500.2 L372.6 499.7 L372.6 499.3 L372.7 498.9 L372.9 498.4 L373.1 498.0 L373.3 497.6 L373.6 497.2 L373.9 496.8 L374.3 496.4 L374.7 496.0 L375.1 495.6 L375.6 495.2 L376.2 494.9 L376.8 494.5 L377.4 494.2 L378.0 493.8 L378.7 493.5 L379.5 493.2 L380.2 492.9 L381.0 492.6 L381.9 492.4 L382.7 492.1 L383.6 491.9 L384.5 491.6 L385.5 491.4 L386.5 491.3 L387.5 491.1 L388.5 490.9 L389.5 490.8 L390.6 490.7 L391.7 490.6 L392.7 490.5 L393.9 490.5 L395.0 490.4 L396.1 490.4 L397.2 490.4 L398.4 490.5 L399.5 490.5 L400.7 490.6 L401.8 490.7 L403.0 490.8 L404.1 490.9 L405.3 491.1 L406.4 491.2 L407.6 491.4 L408.7 491.6 L409.8 491.9 L410.9 492.1 L412.0 492.4 L413.0 492.7 L414.1 493.0 L415.1 493.3 L416.1 493.7 L417.1 494.0 L418.1 494.4 L419.0 494.8 L419.9 495.2 L420.8 495.7 L421.6 496.1 L422.4 496.6 L423.2 497.1 L423.9 497.6 L424.6 498.1 L425.3 498.6 L425.9 499.1 L426.5 499.6 L427.1 500.2 L427.6 500.8 L428.0 501.3 L428.5 501.9 L428.8 502.5 L429.2 503.1 L429.5 503.7 L429.7 504.3 L429.9 504.9 L430.1 505.5 L430.2 506.1 L430.3 506.7 L430.3 507.3 L430.2 507.9 L430.2 508.5 L430.1 509.1 L429.9 509.8 L429.7 510.4" stroke="#3a3a3a" stroke-width="6.900" stroke-linecap="butt"/>
<path d="M373.2 502.3 L373.0 501.9 L372.8 501.4 L372.7 501.0 L372.6 500.6 L372.6 500.2 L372.6 499.7 L372.6 499.3 L372.7 498.9 L372.9 498.4 L373.1 498.0 L373.3 497.6 L373.6 497.2 L373.9 496.8 L374.3 496.4 L374.7 496.0 L375.1 495.6 L375.6 495.2 L376.2 494.9 L376.8 494.5 L377.4 494.2 L378.0 493.8 L378.7 493.5 L379.5 493.2 L380.2 492.9 L381.0 492.6 L381.9 492.4 L382.7 492.1 L383.6 491.9 L384.5 491.6 L385.5 491.4 L386.5 491.3 L387.5 491.1 L388.5 490.9 L389.5 490.8 L390.6 490.7 L391.7 490.6 L392.7 490.5 L393.9 490.5 L395.0 490.4 L396.1 490.4 L397.2 490.4 L398.4 490.5 L399.5 490.5 L400.7 490.6 L401.8 490.7 L403.0 490.8 L404.1 490.9 L405.3 491.1 L406.4 491.2 L407.6 491.4 L408.7 491.6 L409.8 491.9 L410.9 492.1 L412.0 492.4 L413.0 492.7 L414.1 493.0 L415.1 493.3 L416.1 493.7 L417.1 494.0 L418.1 494.4 L419.0 494.8 L419.9 495.2 L420.8 495.7 L421.6 496.1 L422.4 496.6 L423.2 497.1 L423.9 497.6 L424.6 498.1 L425.3 498.6 L425.9 499.1 L426.5 499.6 L427.1 500.2 L427.6 500.8 L428.0 501.3 L428.5 501.9 L428.8 502.5 L429.2 503.1 L429.5 503.7 L429.7 504.3 L429.9 504.9 L430.1 505.5 L430.2 506.1 L430.3 506.7 L430.3 507.3 L430.2 507.9 L430.2 508.5 L430.1 509.1 L429.9 509.8 L429.7 510.4" stroke="#fff" stroke-width="5" stroke-linecap="butt"/>
<path d="M373.5 516.8 L373.2 516.4 L373.1 516.0 L372.9 515.5 L372.8 515.1 L372.8 514.7 L372.8 514.3 L372.9 513.8 L373.0 513.4 L373.1 513.0 L373.3 512.6 L373.5 512.1 L373.8 511.7 L374.1 511.3 L374.5 510.9 L374.9 510.5 L375.3 510.1 L375.8 509.8 L376.4 509.4 L377.0 509.0 L377.6 508.7 L378.2 508.4 L378.9 508.0 L379.6 507.7 L380.4 507.4 L381.2 507.1 L382.0 506.9 L382.9 506.6 L383.8 506.4 L384.7 506.2 L385.7 506.0 L386.6 505.8 L387.6 505.6 L388.6 505.4 L389.7 505.3 L390.7 505.2 L391.8 505.1 L392.9 505.0 L394.0 505.0 L395.1 504.9 L396.3 504.9 L397.4 504.9 L398.5 505.0 L399.7 505.0 L400.8 505.1 L402.0 505.2 L403.2 505.3 L404.3 505.4 L405.4 505.5 L406.6 505.7 L407.7 505.9 L408.8 506.1 L410.0 506.3 L411.1 506.6 L412.1 506.9 L413.2 507.2 L414.3 507.5 L415.3 507.8 L416.3 508.1 L417.3 508.5 L418.2 508.9 L419.2 509.3 L420.1 509.7 L420.9 510.1 L421.8 510.6 L422.6 511.1 L423.4 511.5 L424.1 512.0 L424.8 512.5 L425.5 513.0 L426.1 513.6 L426.7 514.1 L427.3 514.7 L427.8 515.2 L428.2 515.8 L428.7 516.4 L429.1 516.9 L429.4 517.5 L429.7 518.1 L429.9 518.7 L430.2 519.3 L430.3 519.9 L430.4 520.5 L430.5 521.2 L430.5 521.8 L430.5 522.4 L430.4 523.0 L430.3 523.6 L430.2 524.2 L430.0 524.8" stroke="#3a3a3a" stroke-width="6.900" stroke-linecap="butt"/>
<path d="M373.5 516.8 L373.2 516.4 L373.1 516.0 L372.9 515.5 L372.8 515.1 L372.8 514.7 L372.8 514.3 L372.9 513.8 L373.0 513.4 L373.1 513.0 L373.3 512.6 L373.5 512.1 L373.8 511.7 L374.1 511.3 L374.5 510.9 L374.9 510.5 L375.3 510.1 L375.8 509.8 L376.4 509.4 L377.0 509.0 L377.6 508.7 L378.2 508.4 L378.9 508.0 L379.6 507.7 L380.4 507.4 L381.2 507.1 L382.0 506.9 L382.9 506.6 L383.8 506.4 L384.7 506.2 L385.7 506.0 L386.6 505.8 L387.6 505.6 L388.6 505.4 L389.7 505.3 L390.7 505.2 L391.8 505.1 L392.9 505.0 L394.0 505.0 L395.1 504.9 L396.3 504.9 L397.4 504.9 L398.5 505.0 L399.7 505.0 L400.8 505.1 L402.0 505.2 L403.2 505.3 L404.3 505.4 L405.4 505.5 L406.6 505.7 L407.7 505.9 L408.8 506.1 L410.0 506.3 L411.1 506.6 L412.1 506.9 L413.2 507.2 L414.3 507.5 L415.3 507.8 L416.3 508.1 L417.3 508.5 L418.2 508.9 L419.2 509.3 L420.1 509.7 L420.9 510.1 L421.8 510.6 L422.6 511.1 L423.4 511.5 L424.1 512.0 L424.8 512.5 L425.5 513.0 L426.1 513.6 L426.7 514.1 L427.3 514.7 L427.8 515.2 L428.2 515.8 L428.7 516.4 L429.1 516.9 L429.4 517.5 L429.7 518.1 L429.9 518.7 L430.2 519.3 L430.3 519.9 L430.4 520.5 L430.5 521.2 L430.5 521.8 L430.5 522.4 L430.4 523.0 L430.3 523.6 L430.2 524.2 L430.0 524.8" stroke="#fff" stroke-width="5" stroke-linecap="butt"/>
<path d="M374.7 531.2 L374.5 530.8 L374.4 530.4 L374.3 530.0 L374.2 529.6 L374.2 529.2 L374.3 528.8 L374.4 528.4 L374.5 528.0 L374.7 527.6 L374.9 527.2 L375.1 526.8 L375.4 526.5 L375.8 526.1 L376.1 525.7 L376.6 525.4 L377.0 525.0 L377.5 524.7 L378.1 524.3 L378.6 524.0 L379.2 523.7 L379.9 523.4 L380.6 523.1 L381.3 522.8 L382.0 522.6" stroke="#3a3a3a" stroke-width="6.900" stroke-linecap="butt"/>
<path d="M374.7 531.2 L374.5 530.8 L374.4 530.4 L374.3 530.0 L374.2 529.6 L374.2 529.2 L374.3 528.8 L374.4 528.4 L374.5 528.0 L374.7 527.6 L374.9 527.2 L375.1 526.8 L375.4 526.5 L375.8 526.1 L376.1 525.7 L376.6 525.4 L377.0 525.0 L377.5 524.7 L378.1 524.3 L378.6 524.0 L379.2 523.7 L379.9 523.4 L380.6 523.1 L381.3 522.8 L382.0 522.6" stroke="#fff" stroke-width="5" stroke-linecap="butt"/>
<path d="M417.3 439.9 L417.3 440.3 L417.2 440.7 L417.1 441.1 L417.0 441.5 L416.9 442.0 L416.7 442.4 L416.5 442.8 L416.2 443.1 L416.0 443.5 L415.7 443.9 L415.4 444.3 L415.0 444.7 L414.7 445.0 L414.3 445.4 L413.9 445.7 L413.4 446.0 L412.9 446.4 L412.5 446.7 L412.0 447.0 L411.4 447.3 L410.9 447.6 L410.3 447.8 L409.7 448.1 L409.1 448.3 L408.5 448.5 L407.8 448.8 L407.2 449.0 L406.5 449.1 L405.8 449.3 L405.2 449.5 L404.5 449.6 L403.7 449.7 L403.0 449.9 L402.3 450.0 L401.6 450.0 L400.8 450.1 L400.1 450.2 L399.4 450.2 L398.6 450.2 L397.9 450.2 L397.2 450.2 L396.4 450.2 L395.7 450.1 L395.0 450.0 L394.2 450.0 L393.5 449.9 L392.8 449.8 L392.1 449.6 L391.4 449.5 L390.8 449.4 L390.1 449.2 L389.5 449.0 L388.8 448.8 L388.2 448.6 L387.6 448.4 L387.0 448.1 L386.5 447.9 L385.9 447.6 L385.4 447.4 L384.9 447.1 L384.4 446.8 L384.0 446.5 L383.5 446.2 L383.1 445.8 L382.8 445.5 L382.4 445.2 L382.1 444.8 L381.8 444.5 L381.5 444.1 L381.2 443.8 L381.0 443.4 L380.8 443.0 L380.7 442.6 L380.5 442.3 L380.4 441.9 L380.4 441.5 L380.3 441.1 L380.3 440.7" stroke="#3a3a3a" stroke-width="6.900" stroke-linecap="butt"/>
<path d="M417.3 439.9 L417.3 440.3 L417.2 440.7 L417.1 441.1 L417.0 441.5 L416.9 442.0 L416.7 442.4 L416.5 442.8 L416.2 443.1 L416.0 443.5 L415.7 443.9 L415.4 444.3 L415.0 444.7 L414.7 445.0 L414.3 445.4 L413.9 445.7 L413.4 446.0 L412.9 446.4 L412.5 446.7 L412.0 447.0 L411.4 447.3 L410.9 447.6 L410.3 447.8 L409.7 448.1 L409.1 448.3 L408.5 448.5 L407.8 448.8 L407.2 449.0 L406.5 449.1 L405.8 449.3 L405.2 449.5 L404.5 449.6 L403.7 449.7 L403.0 449.9 L402.3 450.0 L401.6 450.0 L400.8 450.1 L400.1 450.2 L399.4 450.2 L398.6 450.2 L397.9 450.2 L397.2 450.2 L396.4 450.2 L395.7 450.1 L395.0 450.0 L394.2 450.0 L393.5 449.9 L392.8 449.8 L392.1 449.6 L391.4 449.5 L390.8 449.4 L390.1 449.2 L389.5 449.0 L388.8 448.8 L388.2 448.6 L387.6 448.4 L387.0 448.1 L386.5 447.9 L385.9 447.6 L385.4 447.4 L384.9 447.1 L384.4 446.8 L384.0 446.5 L383.5 446.2 L383.1 445.8 L382.8 445.5 L382.4 445.2 L382.1 444.8 L381.8 444.5 L381.5 444.1 L381.2 443.8 L381.0 443.4 L380.8 443.0 L380.7 442.6 L380.5 442.3 L380.4 441.9 L380.4 441.5 L380.3 441.1 L380.3 440.7" stroke="#fff" stroke-width="5" stroke-linecap="butt"/>
<path d="M420.9 446.5 L421.0 447.1 L421.1 447.7 L421.2 448.2 L421.2 448.8 L421.2 449.4 L421.1 450.0 L421.0 450.5 L420.9 451.1 L420.7 451.7 L420.5 452.2 L420.3 452.8 L420.0 453.3 L419.7 453.9 L419.3 454.4 L419.0 454.9 L418.5 455.5 L418.1 456.0 L417.6 456.5 L417.0 457.0 L416.5 457.5 L415.9 457.9 L415.2 458.4 L414.5 458.9 L413.8 459.3 L413.1 459.7 L412.3 460.1 L411.5 460.5 L410.7 460.9 L409.8 461.2 L409.0 461.6 L408.0 461.9 L407.1 462.2 L406.2 462.5 L405.2 462.8 L404.2 463.0 L403.2 463.3 L402.2 463.5 L401.1 463.7 L400.1 463.8 L399.0 464.0 L398.0 464.1 L396.9 464.2 L395.8 464.3 L394.8 464.4 L393.7 464.4 L392.6 464.4 L391.5 464.4 L390.5 464.4 L389.4 464.4 L388.4 464.3 L387.4 464.3 L386.4 464.2 L385.4 464.0 L384.4 463.9 L383.5 463.8 L382.6 463.6 L381.7 463.4 L380.8 463.2 L380.0 463.0 L379.2 462.7 L378.4 462.5 L377.7 462.2 L377.0 461.9 L376.3 461.6 L375.7 461.3 L375.2 461.0 L374.6 460.6 L374.1 460.3 L373.7 460.0 L373.3 459.6 L373.0 459.2 L372.7 458.9 L372.4 458.5 L372.2 458.1 L372.0 457.7 L371.9 457.3 L371.8 456.9 L371.8 456.5" stroke="#3a3a3a" stroke-width="6.900" stroke-linecap="butt"/>
<path d="M420.9 446.5 L421.0 447.1 L421.1 447.7 L421.2 448.2 L421.2 448.8 L421.2 449.4 L421.1 450.0 L421.0 450.5 L420.9 451.1 L420.7 451.7 L420.5 452.2 L420.3 452.8 L420.0 453.3 L419.7 453.9 L419.3 454.4 L419.0 454.9 L418.5 455.5 L418.1 456.0 L417.6 456.5 L417.0 457.0 L416.5 457.5 L415.9 457.9 L415.2 458.4 L414.5 458.9 L413.8 459.3 L413.1 459.7 L412.3 460.1 L411.5 460.5 L410.7 460.9 L409.8 461.2 L409.0 461.6 L408.0 461.9 L407.1 462.2 L406.2 462.5 L405.2 462.8 L404.2 463.0 L403.2 463.3 L402.2 463.5 L401.1 463.7 L400.1 463.8 L399.0 464.0 L398.0 464.1 L396.9 464.2 L395.8 464.3 L394.8 464.4 L393.7 464.4 L392.6 464.4 L391.5 464.4 L390.5 464.4 L389.4 464.4 L388.4 464.3 L387.4 464.3 L386.4 464.2 L385.4 464.0 L384.4 463.9 L383.5 463.8 L382.6 463.6 L381.7 463.4 L380.8 463.2 L380.0 463.0 L379.2 462.7 L378.4 462.5 L377.7 462.2 L377.0 461.9 L376.3 461.6 L375.7 461.3 L375.2 461.0 L374.6 460.6 L374.1 460.3 L373.7 460.0 L373.3 459.6 L373.0 459.2 L372.7 458.9 L372.4 458.5 L372.2 458.1 L372.0 457.7 L371.9 457.3 L371.8 456.9 L371.8 456.5" stroke="#fff" stroke-width="5" stroke-linecap="butt"/>
<path d="M429.5 464.0 L429.5 464.6 L429.4 465.2 L429.3 465.8 L429.1 466.4 L428.9 467.0 L428.6 467.6 L428.3 468.2 L428.0 468.8 L427.6 469.4 L427.1 469.9 L426.6 470.5 L426.1 471.0 L425.5 471.6 L424.9 472.1 L424.3 472.7 L423.6 473.2 L422.9 473.7 L422.1 474.1 L421.4 474.6 L420.5 475.1 L419.7 475.5 L418.8 475.9 L417.9 476.4 L417.0 476.7 L416.0 477.1 L415.0 477.5 L414.0 477.8 L413.0 478.1 L411.9 478.4 L410.8 478.7 L409.8 479.0 L408.7 479.2 L407.5 479.5 L406.4 479.7 L405.3 479.9 L404.1 480.0 L403.0 480.2 L401.9 480.3 L400.7 480.4 L399.6 480.5 L398.4 480.5 L397.3 480.6 L396.1 480.6 L395.0 480.6 L393.9 480.6 L392.8 480.5 L391.7 480.4 L390.6 480.4 L389.5 480.3 L388.5 480.1 L387.4 480.0 L386.4 479.8 L385.4 479.7 L384.5 479.5 L383.5 479.3 L382.6 479.0 L381.8 478.8 L380.9 478.5 L380.1 478.3 L379.3 478.0 L378.6 477.7 L377.9 477.4 L377.2 477.0 L376.5 476.7 L376.0 476.3 L375.4 476.0 L374.9 475.6 L374.4 475.2 L374.0 474.8 L373.6 474.4 L373.2 474.0 L372.9 473.6 L372.7 473.2 L372.4 472.8 L372.3 472.4 L372.2 471.9 L372.1 471.5 L372.1 471.1" stroke="#3a3a3a" stroke-width="6.900" stroke-linecap="butt"/>
<path d="M429.5 464.0 L429.5 464.6 L429.4 465.2 L429.3 465.8 L429.1 466.4 L428.9 467.0 L428.6 467.6 L428.3 468.2 L428.0 468.8 L427.6 469.4 L427.1 469.9 L426.6 470.5 L426.1 471.0 L425.5 471.6 L424.9 472.1 L424.3 472.7 L423.6 473.2 L422.9 473.7 L422.1 474.1 L421.4 474.6 L420.5 475.1 L419.7 475.5 L418.8 475.9 L417.9 476.4 L417.0 476.7 L416.0 477.1 L415.0 477.5 L414.0 477.8 L413.0 478.1 L411.9 478.4 L410.8 478.7 L409.8 479.0 L408.7 479.2 L407.5 479.5 L406.4 479.7 L405.3 479.9 L404.1 480.0 L403.0 480.2 L401.9 480.3 L400.7 480.4 L399.6 480.5 L398.4 480.5 L397.3 480.6 L396.1 480.6 L395.0 480.6 L393.9 480.6 L392.8 480.5 L391.7 480.4 L390.6 480.4 L389.5 480.3 L388.5 480.1 L387.4 480.0 L386.4 479.8 L385.4 479.7 L384.5 479.5 L383.5 479.3 L382.6 479.0 L381.8 478.8 L380.9 478.5 L380.1 478.3 L379.3 478.0 L378.6 477.7 L377.9 477.4 L377.2 477.0 L376.5 476.7 L376.0 476.3 L375.4 476.0 L374.9 475.6 L374.4 475.2 L374.0 474.8 L373.6 474.4 L373.2 474.0 L372.9 473.6 L372.7 473.2 L372.4 472.8 L372.3 472.4 L372.2 471.9 L372.1 471.5 L372.1 471.1" stroke="#fff" stroke-width="5" stroke-linecap="butt"/>
<path d="M429.8 478.4 L429.7 479.0 L429.7 479.6 L429.5 480.2 L429.4 480.8 L429.1 481.5 L428.9 482.0 L428.6 482.6 L428.2 483.2 L427.8 483.8 L427.4 484.4 L426.9 484.9 L426.4 485.5 L425.8 486.1 L425.2 486.6 L424.6 487.1 L423.9 487.6 L423.2 488.1 L422.5 488.6 L421.7 489.1 L420.9 489.5 L420.0 490.0 L419.1 490.4 L418.2 490.8 L417.3 491.2 L416.3 491.6 L415.3 492.0 L414.3 492.3 L413.3 492.6 L412.2 492.9 L411.2 493.2 L410.1 493.5 L409.0 493.7 L407.9 493.9 L406.8 494.2 L405.6 494.3 L404.5 494.5 L403.3 494.6 L402.2 494.8 L401.0 494.9 L399.9 495.0 L398.7 495.0 L397.6 495.1 L396.5 495.1 L395.3 495.1 L394.2 495.1 L393.1 495.0 L392.0 495.0 L390.9 494.9 L389.8 494.8 L388.8 494.7 L387.8 494.5 L386.8 494.4 L385.8 494.2 L384.8 494.0 L383.9 493.8 L383.0 493.6 L382.1 493.3 L381.2 493.1 L380.4 492.8 L379.6 492.5 L378.9 492.2 L378.2 491.9 L377.5 491.5 L376.8 491.2 L376.2 490.9 L375.7 490.5 L375.2 490.1 L374.7 489.7 L374.2 489.4 L373.9 489.0 L373.5 488.6 L373.2 488.2 L372.9 487.7 L372.7 487.3 L372.5 486.9 L372.4 486.5 L372.3 486.0 L372.3 485.6" stroke="#3a3a3a" stroke-width="6.900" stroke-linecap="butt"/>
<path d="M429.8 478.4 L429.7 479.0 L429.7 479.6 L429.5 480.2 L429.4 480.8 L429.1 481.5 L428.9 482.0 L428.6 482.6 L428.2 483.2 L427.8 483.8 L427.4 484.4 L426.9 484.9 L426.4 485.5 L425.8 486.1 L425.2 486.6 L424.6 487.1 L423.9 487.6 L423.2 488.1 L422.5 488.6 L421.7 489.1 L420.9 489.5 L420.0 490.0 L419.1 490.4 L418.2 490.8 L417.3 491.2 L416.3 491.6 L415.3 492.0 L414.3 492.3 L413.3 492.6 L412.2 492.9 L411.2 493.2 L410.1 493.5 L409.0 493.7 L407.9 493.9 L406.8 494.2 L405.6 494.3 L404.5 494.5 L403.3 494.6 L402.2 494.8 L401.0 494.9 L399.9 495.0 L398.7 495.0 L397.6 495.1 L396.5 495.1 L395.3 495.1 L394.2 495.1 L393.1 495.0 L392.0 495.0 L390.9 494.9 L389.8 494.8 L388.8 494.7 L387.8 494.5 L386.8 494.4 L385.8 494.2 L384.8 494.0 L383.9 493.8 L383.0 493.6 L382.1 493.3 L381.2 493.1 L380.4 492.8 L379.6 492.5 L378.9 492.2 L378.2 491.9 L377.5 491.5 L376.8 491.2 L376.2 490.9 L375.7 490.5 L375.2 490.1 L374.7 489.7 L374.2 489.4 L373.9 489.0 L373.5 488.6 L373.2 488.2 L372.9 487.7 L372.7 487.3 L372.5 486.9 L372.4 486.5 L372.3 486.0 L372.3 485.6" stroke="#fff" stroke-width="5" stroke-linecap="butt"/>
<path d="M430.0 492.9 L430.0 493.5 L429.9 494.1 L429.8 494.7 L429.6 495.3 L429.4 495.9 L429.2 496.5 L428.9 497.1 L428.5 497.7 L428.1 498.3 L427.7 498.8 L427.2 499.4 L426.7 500.0 L426.1 500.5 L425.5 501.0 L424.9 501.6 L424.2 502.1 L423.5 502.6 L422.8 503.1 L422.0 503.5 L421.2 504.0 L420.3 504.4 L419.4 504.9 L418.5 505.3 L417.6 505.7 L416.6 506.1 L415.7 506.4 L414.7 506.8 L413.6 507.1 L412.6 507.4 L411.5 507.7 L410.4 508.0 L409.3 508.2 L408.2 508.4 L407.1 508.6 L406.0 508.8 L404.8 509.0 L403.7 509.1 L402.5 509.3 L401.4 509.4 L400.2 509.5 L399.1 509.5 L397.9 509.6 L396.8 509.6 L395.7 509.6 L394.6 509.6 L393.4 509.5 L392.3 509.5 L391.3 509.4 L390.2 509.3 L389.1 509.2 L388.1 509.0 L387.1 508.9 L386.1 508.7 L385.1 508.5 L384.2 508.3 L383.3 508.1 L382.4 507.8 L381.6 507.6 L380.7 507.3 L379.9 507.0 L379.2 506.7 L378.5 506.4 L377.8 506.1 L377.1 505.7 L376.5 505.4 L376.0 505.0 L375.5 504.7 L375.0 504.3 L374.5 503.9 L374.1 503.5 L373.8 503.1 L373.5 502.7 L373.2 502.3 L373.0 501.9 L372.8 501.4 L372.7 501.0 L372.6 500.6 L372.6 500.2" stroke="#3a3a3a" stroke-width="6.900" stroke-linecap="butt"/>
<path d="M430.0 492.9 L430.0 493.5 L429.9 494.1 L429.8 494.7 L429.6 495.3 L429.4 495.9 L429.2 496.5 L428.9 497.1 L428.5 497.7 L428.1 498.3 L427.7 498.8 L427.2 499.4 L426.7 500.0 L426.1 500.5 L425.5 501.0 L424.9 501.6 L424.2 502.1 L423.5 502.6 L422.8 503.1 L422.0 503.5 L421.2 504.0 L420.3 504.4 L419.4 504.9 L418.5 505.3 L417.6 505.7 L416.6 506.1 L415.7 506.4 L414.7 506.8 L413.6 507.1 L412.6 507.4 L411.5 507.7 L410.4 508.0 L409.3 508.2 L408.2 508.4 L407.1 508.6 L406.0 508.8 L404.8 509.0 L403.7 509.1 L402.5 509.3 L401.4 509.4 L400.2 509.5 L399.1 509.5 L397.9 509.6 L396.8 509.6 L395.7 509.6 L394.6 509.6 L393.4 509.5 L392.3 509.5 L391.3 509.4 L390.2 509.3 L389.1 509.2 L388.1 509.0 L387.1 508.9 L386.1 508.7 L385.1 508.5 L384.2 508.3 L383.3 508.1 L382.4 507.8 L381.6 507.6 L380.7 507.3 L379.9 507.0 L379.2 506.7 L378.5 506.4 L377.8 506.1 L377.1 505.7 L376.5 505.4 L376.0 505.0 L375.5 504.7 L375.0 504.3 L374.5 503.9 L374.1 503.5 L373.8 503.1 L373.5 502.7 L373.2 502.3 L373.0 501.9 L372.8 501.4 L372.7 501.0 L372.6 500.6 L372.6 500.2" stroke="#fff" stroke-width="5" stroke-linecap="butt"/>
<path d="M430.3 507.3 L430.2 507.9 L430.2 508.5 L430.1 509.1 L429.9 509.8 L429.7 510.4 L429.4 511.0 L429.1 511.5 L428.8 512.1 L428.4 512.7 L428.0 513.3 L427.5 513.9 L427.0 514.4 L426.4 515.0 L425.8 515.5 L425.2 516.0 L424.5 516.5 L423.8 517.0 L423.1 517.5 L422.3 518.0 L421.5 518.5 L420.6 518.9 L419.8 519.3 L418.9 519.8 L417.9 520.2 L417.0 520.5 L416.0 520.9 L415.0 521.2 L414.0 521.6 L412.9 521.9 L411.8 522.2 L410.8 522.4 L409.7 522.7 L408.6 522.9 L407.4 523.1 L406.3 523.3 L405.2 523.5 L404.0 523.6 L402.9 523.8 L401.7 523.9 L400.6 523.9 L399.4 524.0 L398.3 524.1 L397.1 524.1 L396.0 524.1 L394.9 524.1 L393.8 524.0 L392.7 524.0 L391.6 523.9 L390.5 523.8 L389.5 523.7 L388.4 523.5 L387.4 523.4 L386.4 523.2 L385.5 523.0 L384.5 522.8 L383.6 522.6 L382.7 522.4 L381.9 522.1 L381.0 521.8 L380.3 521.5 L379.5 521.2 L378.8 520.9 L378.1 520.6 L377.4 520.3 L376.8 519.9 L376.3 519.6 L375.7 519.2 L375.3 518.8 L374.8 518.4 L374.4 518.0 L374.1 517.6 L373.7 517.2 L373.5 516.8 L373.2 516.4 L373.1 516.0 L372.9 515.5 L372.8 515.1 L372.8 514.7" stroke="#3a3a3a" stroke-width="6.900" stroke-linecap="butt"/>
<path d="M430.3 507.3 L430.2 507.9 L430.2 508.5 L430.1 509.1 L429.9 509.8 L429.7 510.4 L429.4 511.0 L429.1 511.5 L428.8 512.1 L428.4 512.7 L428.0 513.3 L427.5 513.9 L427.0 514.4 L426.4 515.0 L425.8 515.5 L425.2 516.0 L424.5 516.5 L423.8 517.0 L423.1 517.5 L422.3 518.0 L421.5 518.5 L420.6 518.9 L419.8 519.3 L418.9 519.8 L417.9 520.2 L417.0 520.5 L416.0 520.9 L415.0 521.2 L414.0 521.6 L412.9 521.9 L411.8 522.2 L410.8 522.4 L409.7 522.7 L408.6 522.9 L407.4 523.1 L406.3 523.3 L405.2 523.5 L404.0 523.6 L402.9 523.8 L401.7 523.9 L400.6 523.9 L399.4 524.0 L398.3 524.1 L397.1 524.1 L396.0 524.1 L394.9 524.1 L393.8 524.0 L392.7 524.0 L391.6 523.9 L390.5 523.8 L389.5 523.7 L388.4 523.5 L387.4 523.4 L386.4 523.2 L385.5 523.0 L384.5 522.8 L383.6 522.6 L382.7 522.4 L381.9 522.1 L381.0 521.8 L380.3 521.5 L379.5 521.2 L378.8 520.9 L378.1 520.6 L377.4 520.3 L376.8 519.9 L376.3 519.6 L375.7 519.2 L375.3 518.8 L374.8 518.4 L374.4 518.0 L374.1 517.6 L373.7 517.2 L373.5 516.8 L373.2 516.4 L373.1 516.0 L372.9 515.5 L372.8 515.1 L372.8 514.7" stroke="#fff" stroke-width="5" stroke-linecap="butt"/>
<path d="M430.5 521.8 L430.5 522.4 L430.4 523.0 L430.3 523.6 L430.2 524.2 L430.0 524.8 L429.7 525.4 L429.4 526.0 L429.1 526.6 L428.7 527.2 L428.3 527.7 L427.8 528.3 L427.3 528.9 L426.7 529.4 L426.1 530.0 L425.5 530.5 L424.8 531.0 L424.1 531.5 L423.4 532.0 L422.6 532.5 L421.8 532.9 L421.0 533.4 L420.1 533.8 L419.2 534.2 L418.3 534.6 L417.3 535.0 L416.3 535.4 L415.3 535.7 L414.3 536.0 L413.2 536.4 L412.2 536.6 L411.1 536.9 L410.0 537.2 L408.9 537.4 L407.8 537.6 L406.7 537.8 L405.5 538.0 L404.4 538.1 L403.2 538.2 L402.1 538.4 L400.9 538.4 L399.8 538.5 L398.6 538.6 L397.5 538.6 L396.4 538.6 L395.2 538.6 L394.1 538.5 L393.0 538.5 L391.9 538.4 L390.9 538.3 L389.8 538.1 L388.8 538.0 L387.8 537.8 L386.9 537.6 L385.9 537.4 L385.0 537.2 L384.1 537.0 L383.3 536.7 L382.5 536.5 L381.7 536.2 L380.9 535.9 L380.2 535.6 L379.5 535.3 L378.9 535.0 L378.3 534.6 L377.7 534.3 L377.2 533.9 L376.7 533.5 L376.3 533.2 L375.9 532.8 L375.5 532.4 L375.2 532.0 L374.9 531.6 L374.7 531.2 L374.5 530.8 L374.4 530.4 L374.3 530.0 L374.2 529.6 L374.2 529.2" stroke="#3a3a3a" stroke-width="6.900" stroke-linecap="butt"/>
<path d="M430.5 521.8 L430.5 522.4 L430.4 523.0 L430.3 523.6 L430.2 524.2 L430.0 524.8 L429.7 525.4 L429.4 526.0 L429.1 526.6 L428.7 527.2 L428.3 527.7 L427.8 528.3 L427.3 528.9 L426.7 529.4 L426.1 530.0 L425.5 530.5 L424.8 531.0 L424.1 531.5 L423.4 532.0 L422.6 532.5 L421.8 532.9 L421.0 533.4 L420.1 533.8 L419.2 534.2 L418.3 534.6 L417.3 535.0 L416.3 535.4 L415.3 535.7 L414.3 536.0 L413.2 536.4 L412.2 536.6 L411.1 536.9 L410.0 537.2 L408.9 537.4 L407.8 537.6 L406.7 537.8 L405.5 538.0 L404.4 538.1 L403.2 538.2 L402.1 538.4 L400.9 538.4 L399.8 538.5 L398.6 538.6 L397.5 538.6 L396.4 538.6 L395.2 538.6 L394.1 538.5 L393.0 538.5 L391.9 538.4 L390.9 538.3 L389.8 538.1 L388.8 538.0 L387.8 537.8 L386.9 537.6 L385.9 537.4 L385.0 537.2 L384.1 537.0 L383.3 536.7 L382.5 536.5 L381.7 536.2 L380.9 535.9 L380.2 535.6 L379.5 535.3 L378.9 535.0 L378.3 534.6 L377.7 534.3 L377.2 533.9 L376.7 533.5 L376.3 533.2 L375.9 532.8 L375.5 532.4 L375.2 532.0 L374.9 531.6 L374.7 531.2 L374.5 530.8 L374.4 530.4 L374.3 530.0 L374.2 529.6 L374.2 529.2" stroke="#fff" stroke-width="5" stroke-linecap="butt"/>
<ellipse cx="413.9" cy="433.7" rx="2.500" ry="3" fill="#fff" transform="rotate(-35 413.9 433.7)"/>
<path d="M371.800 586 C371.800 594 381 603.300 397.800 603.300 C414.600 603.300 423.800 594 423.800 586"/>
<ellipse cx="397.800" cy="585.300" rx="26" ry="14.800" fill="#fff"/>
<ellipse cx="397.500" cy="585.500" rx="20.500" ry="11"/>
<ellipse cx="397.300" cy="584.800" rx="17.600" ry="8.800"/>
<path d="M381 588 C383 592 390 594.500 397.300 594.500 C404.600 594.500 412 592 413.800 588"/>
<path d="M552.700 300 V306" stroke="#666" stroke-width=".7"/>
<path d="M553.500 320.500 V329" stroke="#666" stroke-width=".7"/>
<path d="M545.900 316.300 C545.900 318.500 549.500 320.500 553.500 320.500 C557.500 320.500 561 318.500 561 316.300 C561 315 560 314 558.800 313.500 L558 309 C557 306.500 555.500 305.800 553.300 305.800 C551 305.800 549.600 306.500 548.700 309 L548 313.500 C546.800 314 545.900 315 545.900 316.300Z" fill="#fff"/>
<path d="M548 313.500 C550 316 557 316 558.800 313.500"/>
<ellipse cx="553.300" cy="309" rx="3.300" ry="1.500"/>
<path d="M550.300 309.500 L550 315 M556.300 309.500 L556.800 315"/>
<path d="M534.700 346.600 C537 341 540 336 543.500 333.500 C548 330.500 556 328.500 561 327.500 C564 326.500 567 325.800 569.500 326.200 C572.500 326.800 573.300 328.500 572.600 330.500 C571.500 333 570.800 336.500 570.300 340.500 L568 346.500 L566.800 356.500 C564 360 559 361.700 555 361.700 C550 361.700 545 360 542.500 356.500 L541.200 349 Z" fill="#fff"/>
<ellipse cx="554.700" cy="339.500" rx="13.600" ry="8" />
<ellipse cx="555" cy="340.500" rx="11" ry="5.200"/>
<path d="M544.200 343.500 C547 347.500 551 348.500 555.500 348.500 C560 348.500 564.500 347 567.500 343"/>
<path d="M541.200 348.800 C544 351.500 549 353 555 353 C561 353 565.500 351.500 568 347"/>
<ellipse cx="567.600" cy="330" rx="2.300" ry="1.500"/>
<ellipse cx="538.500" cy="345.200" rx="1.300" ry="1"/>
<path d="M546.500 347.500 v5 M548.800 348.300 v4.500 M548.800 352.800 h6"/>
<path d="M570.300 340.500 C571.500 340 571.800 343 570.500 346"/>
<path d="M556.200 362 V369.500" stroke="#666" stroke-width=".7"/>
<path d="M541.800 357 V374 M541.800 376.500 L502.800 377.800 V412" stroke-dasharray="6 2 1.500 2" stroke="#666" stroke-width=".7"/>
<path d="M544 378.500 C544 373 550 369.500 556.800 369.500 C563.500 369.500 569.700 373 569.700 378.500 C569.700 381.500 568.500 384 567.800 386.500 L567.500 419 C566.500 425.500 562.500 428.400 558.800 428.400 C555 428.400 550.500 425.500 549.300 419 L547.200 386.500 C546 384 544 381.500 544 378.500Z" fill="#fff"/>
<ellipse cx="556.300" cy="374.600" rx="5.100" ry="2.500"/>
<path d="M544 378.500 C545.500 383.500 551 386.800 557 386.800 C563 386.800 568.500 383.500 569.700 378.500"/>
<path d="M547.200 386.500 C550 390.500 564 390.800 567.800 386.500"/>
<path d="M547.5 390.5 C551.5 394.8 564.0 394.8 567.7 390.5"/>
<path d="M547.8 392.1 C551.5 396.1 564.0 396.1 567.6 392.1" stroke-width=".6"/>
<path d="M547.8 396.0 C551.5 400.3 564.0 400.3 567.7 396.0"/>
<path d="M548.1 397.6 C551.5 401.6 564.0 401.6 567.6 397.6" stroke-width=".6"/>
<path d="M548.1 401.5 C551.5 405.8 564.0 405.8 567.7 401.5"/>
<path d="M548.4 403.1 C551.5 407.1 564.0 407.1 567.6 403.1" stroke-width=".6"/>
<path d="M548.4 407.0 C551.5 411.3 564.0 411.3 567.7 407.0"/>
<path d="M548.7 408.6 C551.5 412.6 564.0 412.6 567.6 408.6" stroke-width=".6"/>
<path d="M548.7 412.5 C551.5 416.8 564.0 416.8 567.7 412.5"/>
<path d="M549.0 414.1 C551.5 418.1 564.0 418.1 567.6 414.1" stroke-width=".6"/>
<path d="M549.0 417.8 C551.5 422.1 564.0 422.1 567.7 417.8"/>
<path d="M549.3 419.4 C551.5 423.4 564.0 423.4 567.6 419.4" stroke-width=".6"/>
<path d="M551.500 423.300 C554 426 563 426 565.800 423"/>
<path d="M503 412 L503 423 C500.500 424 498.500 425.500 498.300 427.500 C498.300 430 501.500 433.300 505.300 433.500 C509 433.300 512.500 430 512.500 427.500 C512.300 425.500 510 424 507.600 423 L507.600 412 C506.500 411 504.200 411 503 412Z" fill="#fff"/>
<path d="M503 423 C504.500 424 506.200 424 507.600 423 M499 429 C502 431 509 431 512 429"/>
<path d="M558.300 446 L558.500 434.500 C559 433 560.300 433 560.800 434.500 L561.200 446 L562.200 447.500 L564.600 488 L560 488.500 L557.500 447.500 Z" fill="#fff"/>
<path d="M558.300 446 L561.200 446"/>
<path d="M550.600 489 L553.300 552 C554 556 558 558.500 559.300 558.500 L563 627 C560.500 628 558.800 631 559 635 C560 640 566 645 572 646 L577 645 C580 640 581.500 634 579.500 629.500 L577.300 627 L573.300 558 C575 557.500 577 555.500 577 552 L574.400 489 Z" fill="#fff"/>
<ellipse cx="562.500" cy="488.800" rx="11.900" ry="4.300" fill="#fff"/>
<ellipse cx="562.300" cy="488.500" rx="6.500" ry="2.300"/>
<path d="M553.300 552 C556 557 572 557.500 577 552 M559.300 558.500 C563 560 570 559.800 573.300 558"/>
<path d="M563 627 C566 629.300 574 629.300 577.300 627"/>
<ellipse cx="576.300" cy="637.300" rx="4.600" ry="7.300" transform="rotate(18 576.300 637.300)"/>
<ellipse cx="576.500" cy="637.500" rx="2.300" ry="4" transform="rotate(18 576.500 637.500)"/>
<path d="M495.500 593.300 L514.500 603.800 C516.500 604.800 517.800 607.500 516.800 609 C515.800 610.300 514 610.300 512.500 609.600 L491 600.500 Z" fill="#fff"/>
<path d="M486.500 591.500 L490 590.800 L494.500 592.500 L495.800 596 L494.500 600 L491 601.500 L487 600 L485.200 596.500 Z" fill="#fff"/>
<path d="M490 590.800 L489.500 594.500 L491.500 598 L491 601.500 M486.500 591.500 L487.500 595 L487 600"/>
<path d="M510 601.500 L508.500 607.800 M512.300 602.800 L511 609 M514.300 604 L513.300 609.800"/>
<path d="M518 609 L527 613.500 M552 627 L560 631" stroke-dasharray="5 2 1.500 2" stroke="#666" stroke-width=".7"/>
<path d="M533.500 609.500 L548.500 615.500 C552.500 617.500 552.500 627 548 630 L543.500 630.500 L529 624.500 C526 621 527 612 530.500 609.500Z" fill="#fff"/>
<ellipse cx="530.800" cy="616.800" rx="3.600" ry="7.400" transform="rotate(14 530.800 616.800)" fill="#fff"/>
<ellipse cx="546.300" cy="623" rx="4.200" ry="7.600" transform="rotate(14 546.300 623)" fill="#fff"/>
<ellipse cx="546.500" cy="623" rx="2" ry="3.800" transform="rotate(14 546.500 623)"/>
<g stroke="#222" stroke-width=".9">
<path d="M397.500 365 V378.300"/><path d="M397.700 604 V617"/><path d="M359.500 480 H369"/><path d="M470 480.400 H477"/>
<path d="M534 316 H545" stroke-dasharray="2 1.200"/><path d="M523.200 347.200 H534.500" stroke-dasharray="2 1.200"/>
<path d="M539 402 H547.500"/><path d="M505.500 434 V446"/><path d="M540.400 521 H552.300"/><path d="M506.500 588 V600.500"/>
</g>
<g fill="#111" stroke="none"><circle cx="397.500" cy="378.300" r="1"/><circle cx="397.700" cy="604" r="1"/><circle cx="369" cy="480" r="1"/><circle cx="545" cy="316" r="1"/><circle cx="534.700" cy="347.200" r="1"/><circle cx="547.500" cy="402" r="1"/><circle cx="505.500" cy="434" r="1"/><circle cx="552.300" cy="521" r="1"/><circle cx="506.500" cy="600.500" r="1"/></g>
</g></svg>
<div class="ysq" style="left:337.2px;top:301.3px"></div>
<span class="a" style="left:344px;top:301px;font-size:6px;color:#555">=</span>
<div class="lb " style="left:349.5px;top:300.3px;width:26.2px;height:7.7px">18A103</div>
<div class="lb " style="left:385.4px;top:357.2px;width:23.0px;height:7.9px">5586B</div>
<div class="lb " style="left:386.8px;top:617.0px;width:22.8px;height:8.0px">5586A</div>
<div class="lb lbb" style="left:341.6px;top:476.3px;width:18.0px;height:7.6px">5560</div>
<div class="lb lbf lbs" style="left:444.0px;top:476.6px;width:26.2px;height:7.6px">18125A</div>
<div class="ysq" style="left:514.2px;top:313.5px"></div>
<div class="lb " style="left:519.0px;top:312.3px;width:15.2px;height:7.5px">HN1</div>
<div class="ysq" style="left:493.8px;top:344.7px"></div>
<div class="lb " style="left:498.4px;top:343.4px;width:25.0px;height:7.6px">18A161</div>
<div class="lb lbb" style="left:516.5px;top:398.2px;width:22.7px;height:7.8px">5K570</div>
<div class="ysq" style="left:493.3px;top:446.8px"></div>
<div class="lb " style="left:498.0px;top:445.2px;width:15.8px;height:8.0px">HB2</div>
<div class="lb lbb" style="left:516.0px;top:517.2px;width:24.6px;height:7.8px">18125B</div>
<div class="ysq" style="left:493.3px;top:581.0px"></div>
<div class="lb lbb" style="left:498.2px;top:579.5px;width:15.8px;height:8.4px">HB1</div>
<!--SCROLL-->
<div class="a" style="left:873px;top:265px;width:13px;height:395px;background:#f0f0f0"></div>
<div class="a" style="left:874px;top:277px;width:11px;height:323px;background:#c9c9c9"></div>
<svg style="left:876px;top:268px" width="7" height="5" viewBox="0 0 7 5"><path d="M.8 4.200L3.500 1.200l2.700 3" fill="none" stroke="#444" stroke-width="1.300"/></svg>
<svg style="left:876px;top:652px" width="7" height="5" viewBox="0 0 7 5"><path d="M.8 .8L3.500 3.800 6.200.8" fill="none" stroke="#444" stroke-width="1.300"/></svg>
<!--BOTTOM-->
<div class="a" id="dmsi"></div>
<div class="a" id="taskbar"></div>
<!--TASKCONTENT-->
<div class="a" style="left:4px;top:660px;width:882px;height:8px;background:#ececee;border-top:1px solid #d4d4d4"></div>
<svg style="left:4px;top:672px" width="17" height="17" viewBox="0 0 17 17"><g fill="none" stroke="#d42b3a" stroke-width="1.300"><rect x="2" y="1" width="6" height="4.500"/><path d="M.8 7.300h8.400"/><rect x="9.500" y="9" width="6" height="4.500"/><path d="M8.300 15.300h8.400"/><path d="M1.500 10.500l3.500 3.500M5 10.500l-3.500 3.500"/></g></svg>
<span class="t" style="transform:scaleX(0.9091);left:24.500px;top:676.500px;font-size:9px;color:#222">DMSi</span>
<div class="a" style="left:49.500px;top:675px;width:1px;height:13px;background:#555"></div>
<svg style="left:11px;top:700px" width="12" height="12" viewBox="0 0 12 12"><path fill="#fff" d="M0 1.700L4.900 1v4.700H0zM5.500.9L12 0v5.700H5.500zM0 6.300h4.900V11L0 10.300zM5.500 6.300H12V12l-6.500-.9z"/></svg>
<svg style="left:44.500px;top:700px" width="12" height="11" viewBox="0 0 12 11"><g fill="none" stroke="#fff" stroke-width="1"><rect x="2.800" y="2" width="6.400" height="7"/><path d="M.5 2.500v6M11.500 2.500v6M2.800.5h6.400M2.800 10.500h6.400"/></g></svg>
<div class="a" style="left:69.500px;top:692px;width:34px;height:28px;background:#3e4a52"></div>
<div class="a" style="left:69.500px;top:718px;width:34px;height:2px;background:#86b8ea"></div>
<svg style="left:77.500px;top:696px" width="19" height="19" viewBox="0 0 22 22"><circle cx="11" cy="11.500" r="10" fill="url(#fx)"/><circle cx="10.500" cy="13" r="5" fill="#6d3bd6" opacity=".9"/><path d="M2.500 9c1.500-5 7-7.500 10.500-3.500-3-.5-4.500 1.500-3.500 4-2.500-.5-5 1-7.500-.5z" fill="#ffb52a"/><path d="M13 1.500c3 1 6 4 6.500 8-1-2-2.500-3-4-3 0-2-1-4-2.500-5z" fill="#ff7a1f"/></svg>
<div class="a" style="left:107px;top:718px;width:27px;height:2px;background:#86b8ea"></div>
<svg style="left:111.500px;top:696px" width="19" height="19" viewBox="0 0 20 20"><defs><linearGradient id="eg" x1="0" y1="0" x2="1" y2="1"><stop offset="0" stop-color="#35c1f1"/><stop offset=".5" stop-color="#1b86d8"/><stop offset="1" stop-color="#0c59a4"/></linearGradient></defs><circle cx="10" cy="10" r="9.500" fill="url(#eg)"/><path d="M3 13c-1-6 5-10 10-7.500 2 1 3.500 3 3.500 5.500h-9c0 3 3 5 7 3.500-3 4-10 3.500-11.500-1.500z" fill="#4fd67a" opacity=".85"/><path d="M7.500 11c0-2 1.500-3.200 3.200-3.200 1.800 0 3 1.200 3 3.200z" fill="#1d2a32" opacity=".35"/></svg>
<svg style="left:147.500px;top:699px" width="16.500" height="13.500" viewBox="0 0 21 17"><path d="M0 2a1 1 0 011-1h6l2 2h11a1 1 0 011 1v12a1 1 0 01-1 1H1a1 1 0 01-1-1z" fill="#f6c343"/><rect x="0" y="5" width="21" height="12" rx="1" fill="#ffd966"/><rect x="5" y="9" width="11" height="8" fill="#3b93e0"/><rect x="7.500" y="12" width="6" height="5" fill="#ffd966"/></svg>
<div class="a" style="left:176.500px;top:718px;width:28px;height:2px;background:#86b8ea"></div>
<svg style="left:182px;top:698.500px" width="16" height="15" viewBox="0 0 19 19" preserveAspectRatio="none"><rect x=".7" y=".7" width="17.600" height="17.600" fill="#e7f1f7" stroke="#3d89b5" stroke-width="1.400"/><path d="M3 12c3-5 8-8 13-8-2 2-4 3-6 3.500 2 .5 3 .5 5 0-2 3-6 5-12 4.500z" fill="#5f9fc4"/><path d="M2.500 14.500h14" stroke="#8ab6d0" stroke-width="1.500"/></svg>
<svg style="left:573px;top:697px" width="18" height="15" viewBox="0 0 18 15"><path d="M4.500 13.500a3.500 3.500 0 01-.5-7 5 5 0 019.500-1 4 4 0 01.5 8z" fill="#b9d4ef"/><path d="M3 14a3 3 0 010-5.500 4.500 4.500 0 018.500 0 3 3 0 010 5.500z" fill="#7fb0e3"/><circle cx="13" cy="3.500" r="3.300" fill="#e8503e"/></svg>
<span class="t" style="transform:scaleX(0.8776);left:596px;top:701px;font-size:9.500px;color:#fff">6°C</span>
<span class="t" style="transform:scaleX(1.0157);left:617px;top:701px;font-size:9.500px;color:#fff">Pochmurnie</span>
<svg style="left:682px;top:699px" width="13" height="13" viewBox="0 0 13 13"><circle cx="6.500" cy="6.500" r="6.200" fill="#2a8fd6"/><path d="M1.500 7.500c2-1 5-3 10-3-3 1-4 2-5.500 4-1-.5-2.500-.8-4.500-1z" fill="#dff0fb"/></svg>
<svg style="left:699px;top:699px" width="13" height="13" viewBox="0 0 13 13"><rect width="13" height="13" fill="#d61f2b"/><path d="M3.500 2.500v8M3.500 2.500h3.200a2 2 0 010 4H3.500M6.700 6.500a2.100 2.100 0 010 4H3.500" fill="none" stroke="#fff" stroke-width="1.500"/><path d="M9.500 7.500l2.500 3h-2.500z" fill="#fff"/></svg>
<svg style="left:716px;top:701px" width="14" height="10" viewBox="0 0 14 10"><path d="M0 2.500C3 0 9-.5 14 1.500V9C8 9.500 3 9 0 6z" fill="#6aa31d"/><path d="M3 5c1.500-2 5-2.500 8-1-2 2.500-6 3-8 1z" fill="none" stroke="#1d2a32" stroke-width="1"/></svg>
<svg style="left:733px;top:700px" width="15" height="11" viewBox="0 0 15 11"><path d="M4 9.500a3 3 0 01-.3-6 4.500 4.500 0 018.300-.5 3.300 3.300 0 01.3 6.500z" fill="#8d959a"/><path d="M1.500 1l12 9" stroke="#8d959a" stroke-width="1.300"/></svg>
<svg style="left:750px;top:699px" width="15" height="14" viewBox="0 0 15 14"><path d="M6.500 .5l5.500 1.800v4c0 3.200-2.300 5.300-5.500 6.700C3.300 11.600 1 9.500 1 6.300v-4z" fill="#f4f4f4"/><path d="M6.500 .5v12.500M1 6h11" stroke="#1d2a32" stroke-width="1.100"/><path d="M11 7l3.800 6.500H7.200z" fill="#f2c21a"/><path d="M11 9.300v2M11 12v.7" stroke="#1d2a32" stroke-width=".9"/></svg>
<svg style="left:768px;top:699px" width="13" height="14" viewBox="0 0 13 14"><g fill="none" stroke="#e8e8e8" stroke-width="1"><rect x="1.500" y="3.500" width="7" height="7" rx="1"/><path d="M8.500 6l3-1.500v5L8.500 8M3 1.500c2-1 4-1 6 0M3 12.500c2 1 4 1 6 0"/></g></svg>
<svg style="left:783px;top:699px" width="15" height="13" viewBox="0 0 15 13"><g fill="none" stroke="#f0f0f0" stroke-width="1"><rect x="3.500" y="1" width="10.500" height="7.500"/><path d="M8.800 8.500v2.500M5.500 11.500h7"/><rect x=".8" y="4.500" width="3.500" height="7" fill="#1d2a32"/></g></svg>
<svg style="left:800px;top:700px" width="14" height="11" viewBox="0 0 14 11"><path d="M.8 3.800h2.400L6 1.200v8.600L3.200 7.200H.8z" fill="none" stroke="#f0f0f0" stroke-width="1"/><path d="M8 3.500c1 1 1 3 0 4" fill="none" stroke="#f0f0f0" stroke-width="1"/><path d="M10 2c1.800 2 1.800 5 0 7" fill="none" stroke="#77838a" stroke-width="1"/></svg>
<span class="t" style="transform:scaleX(0.8928);left:830.500px;top:695px;font-size:8.500px;color:#fff">15:28</span>
<span class="t" style="transform:scaleX(0.8931);left:820.500px;top:707.500px;font-size:8.500px;color:#fff">30.03.2026</span>
<svg style="left:869px;top:699px" width="16" height="15" viewBox="0 0 16 15"><path d="M1 1h11v8H5.500L3 11.500V9H1z" fill="#f2f2f2"/><path d="M3 3.500h7M3 5.800h7" stroke="#1d2a32" stroke-width=".9"/><circle cx="11.500" cy="10.500" r="3.800" fill="#1d2a32" stroke="#f2f2f2" stroke-width="1"/><text x="11.500" y="13" font-size="6.500" fill="#fff" text-anchor="middle" font-family="Liberation Sans">1</text></svg>
<div class="a" style="left:896px;top:692px;width:1px;height:28px;background:#56626a"></div>
<!--WATERMARK-->
<span class="t" style="transform:scaleX(0.8293);left:712.500px;top:668.500px;font-size:28px;font-weight:bold;color:#f1f1f1;letter-spacing:0.3px;-webkit-text-stroke:2.300px #f1f1f1;paint-order:stroke fill;text-shadow:1px 1px 2px rgba(40,40,40,.75),0 0 2px rgba(70,70,70,.6)">Sprzedajemy</span>
<div class="a" style="left:859px;top:665.300px;width:21.400px;height:21.400px;border-radius:50%;background:#e23b40"></div>
<span class="t" style="transform:scaleX(1.0431);left:863px;top:670px;font-size:11.500px;font-weight:bold;color:#fff">.pl</span>
</div>
</body>
</html>
